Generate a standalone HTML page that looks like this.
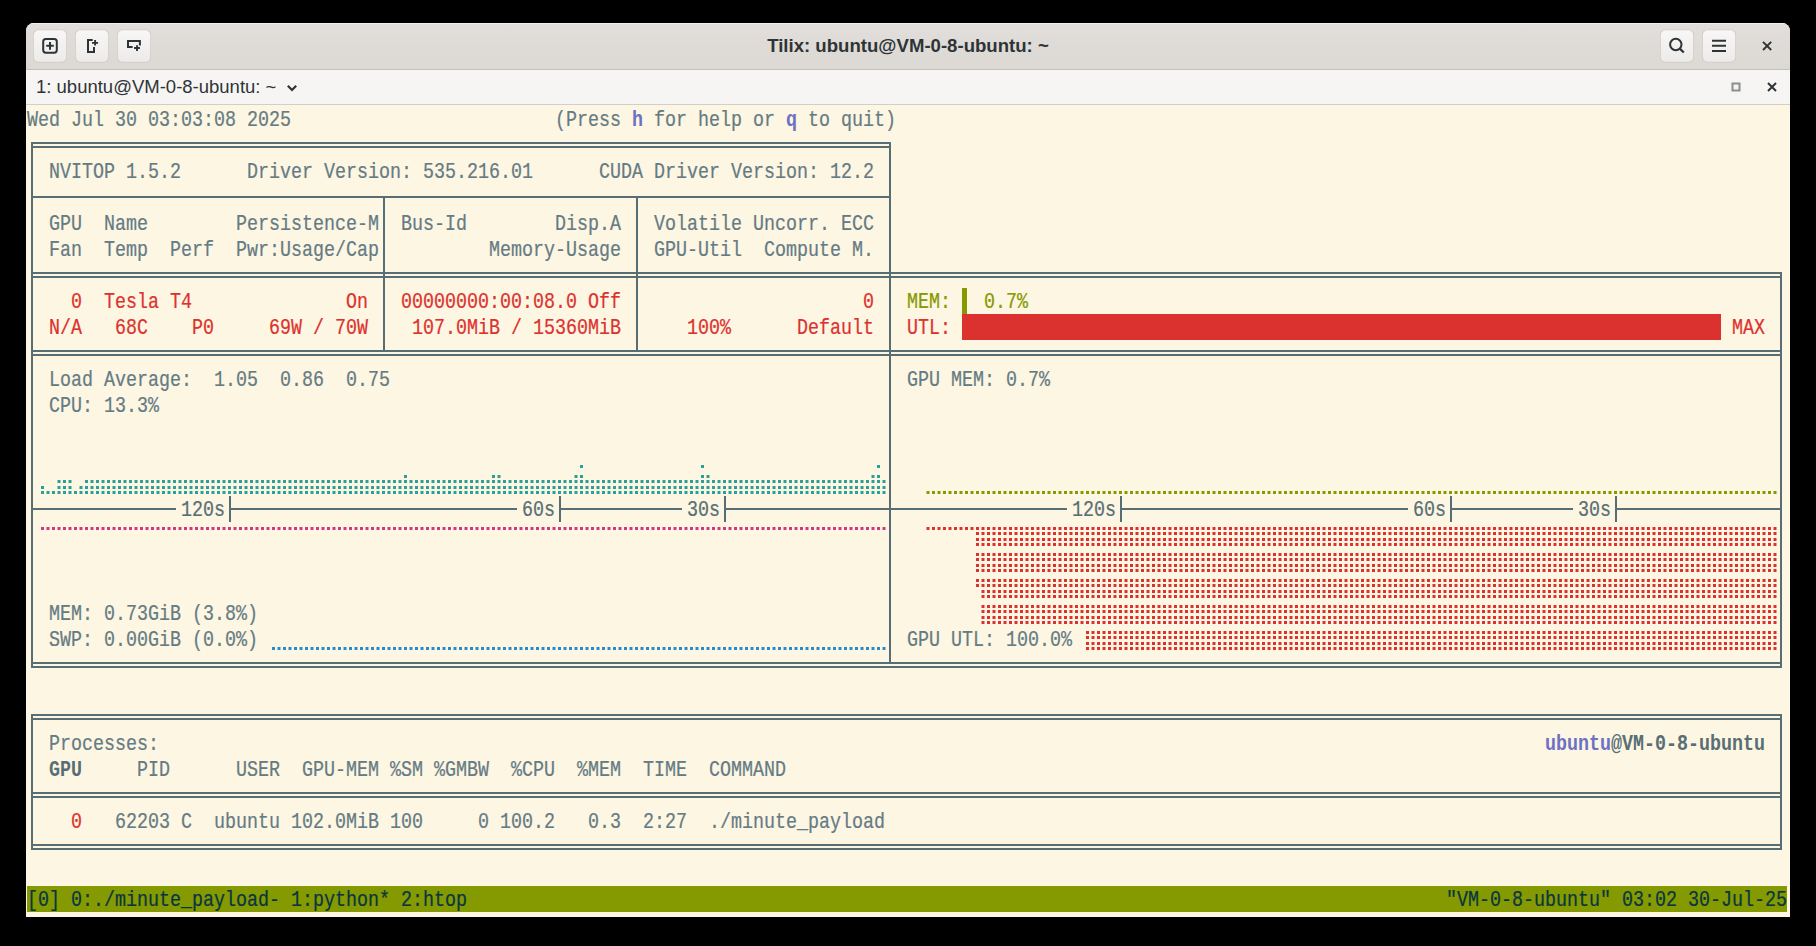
<!DOCTYPE html>
<html><head><meta charset="utf-8"><style>
html,body{margin:0;padding:0;}
body{width:1816px;height:946px;background:#000;position:relative;overflow:hidden;}
.win{position:absolute;left:26px;top:23px;width:1764px;height:894px;background:#fdf6e3;border-radius:8px 8px 0 0;overflow:hidden;}
.title{position:absolute;left:0;top:0;width:1764px;height:46px;background:linear-gradient(#e1dedb,#dcd8d4);border-bottom:1px solid #c7c1bb;box-shadow:inset 0 1px rgba(255,255,255,0.55);}
.tabbar{position:absolute;left:0;top:47px;width:1764px;height:34px;background:#f6f5f4;border-bottom:1px solid #d3cec9;}
.btn{position:absolute;top:7px;width:32px;height:30px;border:1px solid #d2cdc8;border-radius:6px;background:linear-gradient(#f6f5f4,#eeecea);box-shadow:0 1px 1px rgba(0,0,0,0.06);}
.ttl{position:absolute;left:0;top:0;width:1764px;text-align:center;font:bold 18.6px "Liberation Sans",sans-serif;color:#2e3436;line-height:46px;}
.tab{position:absolute;left:10px;top:47px;font:18.5px "Liberation Sans",sans-serif;color:#2e3436;line-height:34px;}
.t{position:absolute;white-space:pre;font-family:"Liberation Mono",monospace;font-size:18.333px;line-height:26px;height:26px;transform:scaleY(1.155);transform-origin:0 17.88px;-webkit-text-stroke:0.2px currentColor;}
.r{position:absolute;}
.dots{position:absolute;left:0;top:0;}
</style></head><body>
<div class="win">
 <div class="title"></div>
 <div class="tabbar"></div>
 <div class="ttl">Tilix: ubuntu@VM-0-8-ubuntu: ~</div>
 <div class="tab">1: ubuntu@VM-0-8-ubuntu: ~</div>
</div>
<svg class="dots" width="1816" height="946" viewBox="0 0 1816 946"><defs><linearGradient id="bg" x1="0" y1="0" x2="0" y2="1"><stop offset="0" stop-color="#f8f7f6"/><stop offset="1" stop-color="#edebe9"/></linearGradient></defs><rect x="33" y="29.6" width="34" height="33" rx="5.5" fill="#cfc9c3" opacity="0.9"/><rect x="33.8" y="30.3" width="32.4" height="31.5" rx="4.8" fill="url(#bg)"/><rect x="75" y="29.6" width="34" height="33" rx="5.5" fill="#cfc9c3" opacity="0.9"/><rect x="75.8" y="30.3" width="32.4" height="31.5" rx="4.8" fill="url(#bg)"/><rect x="117" y="29.6" width="34" height="33" rx="5.5" fill="#cfc9c3" opacity="0.9"/><rect x="117.8" y="30.3" width="32.4" height="31.5" rx="4.8" fill="url(#bg)"/><rect x="1660" y="29.6" width="34" height="33" rx="5.5" fill="#cfc9c3" opacity="0.9"/><rect x="1660.8" y="30.3" width="32.4" height="31.5" rx="4.8" fill="url(#bg)"/><rect x="1702" y="29.6" width="34" height="33" rx="5.5" fill="#cfc9c3" opacity="0.9"/><rect x="1702.8" y="30.3" width="32.4" height="31.5" rx="4.8" fill="url(#bg)"/><g fill="none" stroke="#2e3436" stroke-width="2"><rect x="43.2" y="39" width="13.6" height="13.7" rx="2.6"/><path d="M50 42v7.7M46.2 45.85h7.6"/><path d="M92.7 40H88V51.9H94V47.1"/><path d="M95.1 40.1v5.5M92 42.9h6.1" stroke-width="1.9"/><path d="M132.6 46.9H128V41H139.9V45.6"/><path d="M137 45.2v5.7M134.1 48h5.8" stroke-width="1.9"/><circle cx="1675.8" cy="44.5" r="5.7"/><path d="M1679.8 48.6l4 3.9" stroke-width="2.2"/><path d="M1712 40.7h14M1712 45.85h14M1712 51h14"/><path d="M1763 41.8l8.2 8.2M1771.2 41.8l-8.2 8.2" stroke-width="1.9"/><rect x="1732.5" y="83.5" width="7" height="7" stroke="#8b8e8f"/><path d="M1768 83l8 8M1776 83l-8 8" stroke-width="2"/><path d="M287.8 85.8L292 90L296.2 85.8" stroke-width="2.2"/></g></svg>
<svg class="dots" width="1816" height="946" viewBox="0 0 1816 946"><path fill="#2aa198" d="M41 486h3v3h-3zM41 491h3v3h-3zM46.5 491h3v3h-3zM52 491h3v3h-3zM57.5 480h3v3h-3zM57.5 486h3v3h-3zM57.5 491h3v3h-3zM63 480h3v3h-3zM63 486h3v3h-3zM63 491h3v3h-3zM68.5 480h3v3h-3zM68.5 486h3v3h-3zM68.5 491h3v3h-3zM74 491h3v3h-3zM79.5 486h3v3h-3zM79.5 491h3v3h-3zM85 480h3v3h-3zM85 486h3v3h-3zM85 491h3v3h-3zM90.5 480h3v3h-3zM90.5 486h3v3h-3zM90.5 491h3v3h-3zM96 480h3v3h-3zM96 486h3v3h-3zM96 491h3v3h-3zM101.5 480h3v3h-3zM101.5 486h3v3h-3zM101.5 491h3v3h-3zM107 480h3v3h-3zM107 486h3v3h-3zM107 491h3v3h-3zM112.5 480h3v3h-3zM112.5 486h3v3h-3zM112.5 491h3v3h-3zM118 480h3v3h-3zM118 486h3v3h-3zM118 491h3v3h-3zM123.5 480h3v3h-3zM123.5 486h3v3h-3zM123.5 491h3v3h-3zM129 480h3v3h-3zM129 486h3v3h-3zM129 491h3v3h-3zM134.5 480h3v3h-3zM134.5 486h3v3h-3zM134.5 491h3v3h-3zM140 480h3v3h-3zM140 486h3v3h-3zM140 491h3v3h-3zM145.5 480h3v3h-3zM145.5 486h3v3h-3zM145.5 491h3v3h-3zM151 480h3v3h-3zM151 486h3v3h-3zM151 491h3v3h-3zM156.5 480h3v3h-3zM156.5 486h3v3h-3zM156.5 491h3v3h-3zM162 480h3v3h-3zM162 486h3v3h-3zM162 491h3v3h-3zM167.5 480h3v3h-3zM167.5 486h3v3h-3zM167.5 491h3v3h-3zM173 480h3v3h-3zM173 486h3v3h-3zM173 491h3v3h-3zM178.5 480h3v3h-3zM178.5 486h3v3h-3zM178.5 491h3v3h-3zM184 480h3v3h-3zM184 486h3v3h-3zM184 491h3v3h-3zM189.5 480h3v3h-3zM189.5 486h3v3h-3zM189.5 491h3v3h-3zM195 480h3v3h-3zM195 486h3v3h-3zM195 491h3v3h-3zM200.5 480h3v3h-3zM200.5 486h3v3h-3zM200.5 491h3v3h-3zM206 480h3v3h-3zM206 486h3v3h-3zM206 491h3v3h-3zM211.5 480h3v3h-3zM211.5 486h3v3h-3zM211.5 491h3v3h-3zM217 480h3v3h-3zM217 486h3v3h-3zM217 491h3v3h-3zM222.5 480h3v3h-3zM222.5 486h3v3h-3zM222.5 491h3v3h-3zM228 480h3v3h-3zM228 486h3v3h-3zM228 491h3v3h-3zM233.5 480h3v3h-3zM233.5 486h3v3h-3zM233.5 491h3v3h-3zM239 480h3v3h-3zM239 486h3v3h-3zM239 491h3v3h-3zM244.5 480h3v3h-3zM244.5 486h3v3h-3zM244.5 491h3v3h-3zM250 480h3v3h-3zM250 486h3v3h-3zM250 491h3v3h-3zM255.5 480h3v3h-3zM255.5 486h3v3h-3zM255.5 491h3v3h-3zM261 480h3v3h-3zM261 486h3v3h-3zM261 491h3v3h-3zM266.5 480h3v3h-3zM266.5 486h3v3h-3zM266.5 491h3v3h-3zM272 480h3v3h-3zM272 486h3v3h-3zM272 491h3v3h-3zM277.5 480h3v3h-3zM277.5 486h3v3h-3zM277.5 491h3v3h-3zM283 480h3v3h-3zM283 486h3v3h-3zM283 491h3v3h-3zM288.5 480h3v3h-3zM288.5 486h3v3h-3zM288.5 491h3v3h-3zM294 480h3v3h-3zM294 486h3v3h-3zM294 491h3v3h-3zM299.5 480h3v3h-3zM299.5 486h3v3h-3zM299.5 491h3v3h-3zM305 480h3v3h-3zM305 486h3v3h-3zM305 491h3v3h-3zM310.5 480h3v3h-3zM310.5 486h3v3h-3zM310.5 491h3v3h-3zM316 480h3v3h-3zM316 486h3v3h-3zM316 491h3v3h-3zM321.5 480h3v3h-3zM321.5 486h3v3h-3zM321.5 491h3v3h-3zM327 480h3v3h-3zM327 486h3v3h-3zM327 491h3v3h-3zM332.5 480h3v3h-3zM332.5 486h3v3h-3zM332.5 491h3v3h-3zM338 480h3v3h-3zM338 486h3v3h-3zM338 491h3v3h-3zM343.5 480h3v3h-3zM343.5 486h3v3h-3zM343.5 491h3v3h-3zM349 480h3v3h-3zM349 486h3v3h-3zM349 491h3v3h-3zM354.5 480h3v3h-3zM354.5 486h3v3h-3zM354.5 491h3v3h-3zM360 480h3v3h-3zM360 486h3v3h-3zM360 491h3v3h-3zM365.5 480h3v3h-3zM365.5 486h3v3h-3zM365.5 491h3v3h-3zM371 480h3v3h-3zM371 486h3v3h-3zM371 491h3v3h-3zM376.5 480h3v3h-3zM376.5 486h3v3h-3zM376.5 491h3v3h-3zM382 480h3v3h-3zM382 486h3v3h-3zM382 491h3v3h-3zM387.5 480h3v3h-3zM387.5 486h3v3h-3zM387.5 491h3v3h-3zM393 480h3v3h-3zM393 486h3v3h-3zM393 491h3v3h-3zM398.5 480h3v3h-3zM398.5 486h3v3h-3zM398.5 491h3v3h-3zM404 475h3v3h-3zM404 480h3v3h-3zM404 486h3v3h-3zM404 491h3v3h-3zM409.5 480h3v3h-3zM409.5 486h3v3h-3zM409.5 491h3v3h-3zM415 480h3v3h-3zM415 486h3v3h-3zM415 491h3v3h-3zM420.5 480h3v3h-3zM420.5 486h3v3h-3zM420.5 491h3v3h-3zM426 480h3v3h-3zM426 486h3v3h-3zM426 491h3v3h-3zM431.5 480h3v3h-3zM431.5 486h3v3h-3zM431.5 491h3v3h-3zM437 480h3v3h-3zM437 486h3v3h-3zM437 491h3v3h-3zM442.5 480h3v3h-3zM442.5 486h3v3h-3zM442.5 491h3v3h-3zM448 480h3v3h-3zM448 486h3v3h-3zM448 491h3v3h-3zM453.5 480h3v3h-3zM453.5 486h3v3h-3zM453.5 491h3v3h-3zM459 480h3v3h-3zM459 486h3v3h-3zM459 491h3v3h-3zM464.5 480h3v3h-3zM464.5 486h3v3h-3zM464.5 491h3v3h-3zM470 480h3v3h-3zM470 486h3v3h-3zM470 491h3v3h-3zM475.5 480h3v3h-3zM475.5 486h3v3h-3zM475.5 491h3v3h-3zM481 480h3v3h-3zM481 486h3v3h-3zM481 491h3v3h-3zM486.5 480h3v3h-3zM486.5 486h3v3h-3zM486.5 491h3v3h-3zM492 475h3v3h-3zM492 480h3v3h-3zM492 486h3v3h-3zM492 491h3v3h-3zM497.5 475h3v3h-3zM497.5 480h3v3h-3zM497.5 486h3v3h-3zM497.5 491h3v3h-3zM503 480h3v3h-3zM503 486h3v3h-3zM503 491h3v3h-3zM508.5 480h3v3h-3zM508.5 486h3v3h-3zM508.5 491h3v3h-3zM514 480h3v3h-3zM514 486h3v3h-3zM514 491h3v3h-3zM519.5 480h3v3h-3zM519.5 486h3v3h-3zM519.5 491h3v3h-3zM525 480h3v3h-3zM525 486h3v3h-3zM525 491h3v3h-3zM530.5 480h3v3h-3zM530.5 486h3v3h-3zM530.5 491h3v3h-3zM536 480h3v3h-3zM536 486h3v3h-3zM536 491h3v3h-3zM541.5 480h3v3h-3zM541.5 486h3v3h-3zM541.5 491h3v3h-3zM547 480h3v3h-3zM547 486h3v3h-3zM547 491h3v3h-3zM552.5 480h3v3h-3zM552.5 486h3v3h-3zM552.5 491h3v3h-3zM558 480h3v3h-3zM558 486h3v3h-3zM558 491h3v3h-3zM563.5 480h3v3h-3zM563.5 486h3v3h-3zM563.5 491h3v3h-3zM569 480h3v3h-3zM569 486h3v3h-3zM569 491h3v3h-3zM574.5 475h3v3h-3zM574.5 480h3v3h-3zM574.5 486h3v3h-3zM574.5 491h3v3h-3zM580 475h3v3h-3zM580 480h3v3h-3zM580 486h3v3h-3zM580 491h3v3h-3zM580 465h3v3h-3zM585.5 480h3v3h-3zM585.5 486h3v3h-3zM585.5 491h3v3h-3zM591 480h3v3h-3zM591 486h3v3h-3zM591 491h3v3h-3zM596.5 480h3v3h-3zM596.5 486h3v3h-3zM596.5 491h3v3h-3zM602 480h3v3h-3zM602 486h3v3h-3zM602 491h3v3h-3zM607.5 480h3v3h-3zM607.5 486h3v3h-3zM607.5 491h3v3h-3zM613 480h3v3h-3zM613 486h3v3h-3zM613 491h3v3h-3zM618.5 480h3v3h-3zM618.5 486h3v3h-3zM618.5 491h3v3h-3zM624 480h3v3h-3zM624 486h3v3h-3zM624 491h3v3h-3zM629.5 480h3v3h-3zM629.5 486h3v3h-3zM629.5 491h3v3h-3zM635 480h3v3h-3zM635 486h3v3h-3zM635 491h3v3h-3zM640.5 480h3v3h-3zM640.5 486h3v3h-3zM640.5 491h3v3h-3zM646 480h3v3h-3zM646 486h3v3h-3zM646 491h3v3h-3zM651.5 480h3v3h-3zM651.5 486h3v3h-3zM651.5 491h3v3h-3zM657 480h3v3h-3zM657 486h3v3h-3zM657 491h3v3h-3zM662.5 480h3v3h-3zM662.5 486h3v3h-3zM662.5 491h3v3h-3zM668 480h3v3h-3zM668 486h3v3h-3zM668 491h3v3h-3zM673.5 480h3v3h-3zM673.5 486h3v3h-3zM673.5 491h3v3h-3zM679 480h3v3h-3zM679 486h3v3h-3zM679 491h3v3h-3zM684.5 480h3v3h-3zM684.5 486h3v3h-3zM684.5 491h3v3h-3zM690 480h3v3h-3zM690 486h3v3h-3zM690 491h3v3h-3zM695.5 480h3v3h-3zM695.5 486h3v3h-3zM695.5 491h3v3h-3zM701 475h3v3h-3zM701 480h3v3h-3zM701 486h3v3h-3zM701 491h3v3h-3zM701 465h3v3h-3zM706.5 475h3v3h-3zM706.5 480h3v3h-3zM706.5 486h3v3h-3zM706.5 491h3v3h-3zM712 480h3v3h-3zM712 486h3v3h-3zM712 491h3v3h-3zM717.5 480h3v3h-3zM717.5 486h3v3h-3zM717.5 491h3v3h-3zM723 480h3v3h-3zM723 486h3v3h-3zM723 491h3v3h-3zM728.5 480h3v3h-3zM728.5 486h3v3h-3zM728.5 491h3v3h-3zM734 480h3v3h-3zM734 486h3v3h-3zM734 491h3v3h-3zM739.5 480h3v3h-3zM739.5 486h3v3h-3zM739.5 491h3v3h-3zM745 480h3v3h-3zM745 486h3v3h-3zM745 491h3v3h-3zM750.5 480h3v3h-3zM750.5 486h3v3h-3zM750.5 491h3v3h-3zM756 480h3v3h-3zM756 486h3v3h-3zM756 491h3v3h-3zM761.5 480h3v3h-3zM761.5 486h3v3h-3zM761.5 491h3v3h-3zM767 480h3v3h-3zM767 486h3v3h-3zM767 491h3v3h-3zM772.5 480h3v3h-3zM772.5 486h3v3h-3zM772.5 491h3v3h-3zM778 480h3v3h-3zM778 486h3v3h-3zM778 491h3v3h-3zM783.5 480h3v3h-3zM783.5 486h3v3h-3zM783.5 491h3v3h-3zM789 480h3v3h-3zM789 486h3v3h-3zM789 491h3v3h-3zM794.5 480h3v3h-3zM794.5 486h3v3h-3zM794.5 491h3v3h-3zM800 480h3v3h-3zM800 486h3v3h-3zM800 491h3v3h-3zM805.5 480h3v3h-3zM805.5 486h3v3h-3zM805.5 491h3v3h-3zM811 480h3v3h-3zM811 486h3v3h-3zM811 491h3v3h-3zM816.5 480h3v3h-3zM816.5 486h3v3h-3zM816.5 491h3v3h-3zM822 480h3v3h-3zM822 486h3v3h-3zM822 491h3v3h-3zM827.5 480h3v3h-3zM827.5 486h3v3h-3zM827.5 491h3v3h-3zM833 480h3v3h-3zM833 486h3v3h-3zM833 491h3v3h-3zM838.5 480h3v3h-3zM838.5 486h3v3h-3zM838.5 491h3v3h-3zM844 480h3v3h-3zM844 486h3v3h-3zM844 491h3v3h-3zM849.5 480h3v3h-3zM849.5 486h3v3h-3zM849.5 491h3v3h-3zM855 480h3v3h-3zM855 486h3v3h-3zM855 491h3v3h-3zM860.5 480h3v3h-3zM860.5 486h3v3h-3zM860.5 491h3v3h-3zM866 480h3v3h-3zM866 486h3v3h-3zM866 491h3v3h-3zM871.5 475h3v3h-3zM871.5 480h3v3h-3zM871.5 486h3v3h-3zM871.5 491h3v3h-3zM877 475h3v3h-3zM877 480h3v3h-3zM877 486h3v3h-3zM877 491h3v3h-3zM877 465h3v3h-3zM882.5 480h3v3h-3zM882.5 486h3v3h-3zM882.5 491h3v3h-3z"/><path fill="#d33682" d="M41 527h3v3h-3zM46.5 527h3v3h-3zM52 527h3v3h-3zM57.5 527h3v3h-3zM63 527h3v3h-3zM68.5 527h3v3h-3zM74 527h3v3h-3zM79.5 527h3v3h-3zM85 527h3v3h-3zM90.5 527h3v3h-3zM96 527h3v3h-3zM101.5 527h3v3h-3zM107 527h3v3h-3zM112.5 527h3v3h-3zM118 527h3v3h-3zM123.5 527h3v3h-3zM129 527h3v3h-3zM134.5 527h3v3h-3zM140 527h3v3h-3zM145.5 527h3v3h-3zM151 527h3v3h-3zM156.5 527h3v3h-3zM162 527h3v3h-3zM167.5 527h3v3h-3zM173 527h3v3h-3zM178.5 527h3v3h-3zM184 527h3v3h-3zM189.5 527h3v3h-3zM195 527h3v3h-3zM200.5 527h3v3h-3zM206 527h3v3h-3zM211.5 527h3v3h-3zM217 527h3v3h-3zM222.5 527h3v3h-3zM228 527h3v3h-3zM233.5 527h3v3h-3zM239 527h3v3h-3zM244.5 527h3v3h-3zM250 527h3v3h-3zM255.5 527h3v3h-3zM261 527h3v3h-3zM266.5 527h3v3h-3zM272 527h3v3h-3zM277.5 527h3v3h-3zM283 527h3v3h-3zM288.5 527h3v3h-3zM294 527h3v3h-3zM299.5 527h3v3h-3zM305 527h3v3h-3zM310.5 527h3v3h-3zM316 527h3v3h-3zM321.5 527h3v3h-3zM327 527h3v3h-3zM332.5 527h3v3h-3zM338 527h3v3h-3zM343.5 527h3v3h-3zM349 527h3v3h-3zM354.5 527h3v3h-3zM360 527h3v3h-3zM365.5 527h3v3h-3zM371 527h3v3h-3zM376.5 527h3v3h-3zM382 527h3v3h-3zM387.5 527h3v3h-3zM393 527h3v3h-3zM398.5 527h3v3h-3zM404 527h3v3h-3zM409.5 527h3v3h-3zM415 527h3v3h-3zM420.5 527h3v3h-3zM426 527h3v3h-3zM431.5 527h3v3h-3zM437 527h3v3h-3zM442.5 527h3v3h-3zM448 527h3v3h-3zM453.5 527h3v3h-3zM459 527h3v3h-3zM464.5 527h3v3h-3zM470 527h3v3h-3zM475.5 527h3v3h-3zM481 527h3v3h-3zM486.5 527h3v3h-3zM492 527h3v3h-3zM497.5 527h3v3h-3zM503 527h3v3h-3zM508.5 527h3v3h-3zM514 527h3v3h-3zM519.5 527h3v3h-3zM525 527h3v3h-3zM530.5 527h3v3h-3zM536 527h3v3h-3zM541.5 527h3v3h-3zM547 527h3v3h-3zM552.5 527h3v3h-3zM558 527h3v3h-3zM563.5 527h3v3h-3zM569 527h3v3h-3zM574.5 527h3v3h-3zM580 527h3v3h-3zM585.5 527h3v3h-3zM591 527h3v3h-3zM596.5 527h3v3h-3zM602 527h3v3h-3zM607.5 527h3v3h-3zM613 527h3v3h-3zM618.5 527h3v3h-3zM624 527h3v3h-3zM629.5 527h3v3h-3zM635 527h3v3h-3zM640.5 527h3v3h-3zM646 527h3v3h-3zM651.5 527h3v3h-3zM657 527h3v3h-3zM662.5 527h3v3h-3zM668 527h3v3h-3zM673.5 527h3v3h-3zM679 527h3v3h-3zM684.5 527h3v3h-3zM690 527h3v3h-3zM695.5 527h3v3h-3zM701 527h3v3h-3zM706.5 527h3v3h-3zM712 527h3v3h-3zM717.5 527h3v3h-3zM723 527h3v3h-3zM728.5 527h3v3h-3zM734 527h3v3h-3zM739.5 527h3v3h-3zM745 527h3v3h-3zM750.5 527h3v3h-3zM756 527h3v3h-3zM761.5 527h3v3h-3zM767 527h3v3h-3zM772.5 527h3v3h-3zM778 527h3v3h-3zM783.5 527h3v3h-3zM789 527h3v3h-3zM794.5 527h3v3h-3zM800 527h3v3h-3zM805.5 527h3v3h-3zM811 527h3v3h-3zM816.5 527h3v3h-3zM822 527h3v3h-3zM827.5 527h3v3h-3zM833 527h3v3h-3zM838.5 527h3v3h-3zM844 527h3v3h-3zM849.5 527h3v3h-3zM855 527h3v3h-3zM860.5 527h3v3h-3zM866 527h3v3h-3zM871.5 527h3v3h-3zM877 527h3v3h-3zM882.5 527h3v3h-3z"/><path fill="#268bd2" d="M272 647h3v3h-3zM277.5 647h3v3h-3zM283 647h3v3h-3zM288.5 647h3v3h-3zM294 647h3v3h-3zM299.5 647h3v3h-3zM305 647h3v3h-3zM310.5 647h3v3h-3zM316 647h3v3h-3zM321.5 647h3v3h-3zM327 647h3v3h-3zM332.5 647h3v3h-3zM338 647h3v3h-3zM343.5 647h3v3h-3zM349 647h3v3h-3zM354.5 647h3v3h-3zM360 647h3v3h-3zM365.5 647h3v3h-3zM371 647h3v3h-3zM376.5 647h3v3h-3zM382 647h3v3h-3zM387.5 647h3v3h-3zM393 647h3v3h-3zM398.5 647h3v3h-3zM404 647h3v3h-3zM409.5 647h3v3h-3zM415 647h3v3h-3zM420.5 647h3v3h-3zM426 647h3v3h-3zM431.5 647h3v3h-3zM437 647h3v3h-3zM442.5 647h3v3h-3zM448 647h3v3h-3zM453.5 647h3v3h-3zM459 647h3v3h-3zM464.5 647h3v3h-3zM470 647h3v3h-3zM475.5 647h3v3h-3zM481 647h3v3h-3zM486.5 647h3v3h-3zM492 647h3v3h-3zM497.5 647h3v3h-3zM503 647h3v3h-3zM508.5 647h3v3h-3zM514 647h3v3h-3zM519.5 647h3v3h-3zM525 647h3v3h-3zM530.5 647h3v3h-3zM536 647h3v3h-3zM541.5 647h3v3h-3zM547 647h3v3h-3zM552.5 647h3v3h-3zM558 647h3v3h-3zM563.5 647h3v3h-3zM569 647h3v3h-3zM574.5 647h3v3h-3zM580 647h3v3h-3zM585.5 647h3v3h-3zM591 647h3v3h-3zM596.5 647h3v3h-3zM602 647h3v3h-3zM607.5 647h3v3h-3zM613 647h3v3h-3zM618.5 647h3v3h-3zM624 647h3v3h-3zM629.5 647h3v3h-3zM635 647h3v3h-3zM640.5 647h3v3h-3zM646 647h3v3h-3zM651.5 647h3v3h-3zM657 647h3v3h-3zM662.5 647h3v3h-3zM668 647h3v3h-3zM673.5 647h3v3h-3zM679 647h3v3h-3zM684.5 647h3v3h-3zM690 647h3v3h-3zM695.5 647h3v3h-3zM701 647h3v3h-3zM706.5 647h3v3h-3zM712 647h3v3h-3zM717.5 647h3v3h-3zM723 647h3v3h-3zM728.5 647h3v3h-3zM734 647h3v3h-3zM739.5 647h3v3h-3zM745 647h3v3h-3zM750.5 647h3v3h-3zM756 647h3v3h-3zM761.5 647h3v3h-3zM767 647h3v3h-3zM772.5 647h3v3h-3zM778 647h3v3h-3zM783.5 647h3v3h-3zM789 647h3v3h-3zM794.5 647h3v3h-3zM800 647h3v3h-3zM805.5 647h3v3h-3zM811 647h3v3h-3zM816.5 647h3v3h-3zM822 647h3v3h-3zM827.5 647h3v3h-3zM833 647h3v3h-3zM838.5 647h3v3h-3zM844 647h3v3h-3zM849.5 647h3v3h-3zM855 647h3v3h-3zM860.5 647h3v3h-3zM866 647h3v3h-3zM871.5 647h3v3h-3zM877 647h3v3h-3zM882.5 647h3v3h-3z"/><path fill="#859900" d="M926.5 491h3v3h-3zM932 491h3v3h-3zM937.5 491h3v3h-3zM943 491h3v3h-3zM948.5 491h3v3h-3zM954 491h3v3h-3zM959.5 491h3v3h-3zM965 491h3v3h-3zM970.5 491h3v3h-3zM976 491h3v3h-3zM981.5 491h3v3h-3zM987 491h3v3h-3zM992.5 491h3v3h-3zM998 491h3v3h-3zM1003.5 491h3v3h-3zM1009 491h3v3h-3zM1014.5 491h3v3h-3zM1020 491h3v3h-3zM1025.5 491h3v3h-3zM1031 491h3v3h-3zM1036.5 491h3v3h-3zM1042 491h3v3h-3zM1047.5 491h3v3h-3zM1053 491h3v3h-3zM1058.5 491h3v3h-3zM1064 491h3v3h-3zM1069.5 491h3v3h-3zM1075 491h3v3h-3zM1080.5 491h3v3h-3zM1086 491h3v3h-3zM1091.5 491h3v3h-3zM1097 491h3v3h-3zM1102.5 491h3v3h-3zM1108 491h3v3h-3zM1113.5 491h3v3h-3zM1119 491h3v3h-3zM1124.5 491h3v3h-3zM1130 491h3v3h-3zM1135.5 491h3v3h-3zM1141 491h3v3h-3zM1146.5 491h3v3h-3zM1152 491h3v3h-3zM1157.5 491h3v3h-3zM1163 491h3v3h-3zM1168.5 491h3v3h-3zM1174 491h3v3h-3zM1179.5 491h3v3h-3zM1185 491h3v3h-3zM1190.5 491h3v3h-3zM1196 491h3v3h-3zM1201.5 491h3v3h-3zM1207 491h3v3h-3zM1212.5 491h3v3h-3zM1218 491h3v3h-3zM1223.5 491h3v3h-3zM1229 491h3v3h-3zM1234.5 491h3v3h-3zM1240 491h3v3h-3zM1245.5 491h3v3h-3zM1251 491h3v3h-3zM1256.5 491h3v3h-3zM1262 491h3v3h-3zM1267.5 491h3v3h-3zM1273 491h3v3h-3zM1278.5 491h3v3h-3zM1284 491h3v3h-3zM1289.5 491h3v3h-3zM1295 491h3v3h-3zM1300.5 491h3v3h-3zM1306 491h3v3h-3zM1311.5 491h3v3h-3zM1317 491h3v3h-3zM1322.5 491h3v3h-3zM1328 491h3v3h-3zM1333.5 491h3v3h-3zM1339 491h3v3h-3zM1344.5 491h3v3h-3zM1350 491h3v3h-3zM1355.5 491h3v3h-3zM1361 491h3v3h-3zM1366.5 491h3v3h-3zM1372 491h3v3h-3zM1377.5 491h3v3h-3zM1383 491h3v3h-3zM1388.5 491h3v3h-3zM1394 491h3v3h-3zM1399.5 491h3v3h-3zM1405 491h3v3h-3zM1410.5 491h3v3h-3zM1416 491h3v3h-3zM1421.5 491h3v3h-3zM1427 491h3v3h-3zM1432.5 491h3v3h-3zM1438 491h3v3h-3zM1443.5 491h3v3h-3zM1449 491h3v3h-3zM1454.5 491h3v3h-3zM1460 491h3v3h-3zM1465.5 491h3v3h-3zM1471 491h3v3h-3zM1476.5 491h3v3h-3zM1482 491h3v3h-3zM1487.5 491h3v3h-3zM1493 491h3v3h-3zM1498.5 491h3v3h-3zM1504 491h3v3h-3zM1509.5 491h3v3h-3zM1515 491h3v3h-3zM1520.5 491h3v3h-3zM1526 491h3v3h-3zM1531.5 491h3v3h-3zM1537 491h3v3h-3zM1542.5 491h3v3h-3zM1548 491h3v3h-3zM1553.5 491h3v3h-3zM1559 491h3v3h-3zM1564.5 491h3v3h-3zM1570 491h3v3h-3zM1575.5 491h3v3h-3zM1581 491h3v3h-3zM1586.5 491h3v3h-3zM1592 491h3v3h-3zM1597.5 491h3v3h-3zM1603 491h3v3h-3zM1608.5 491h3v3h-3zM1614 491h3v3h-3zM1619.5 491h3v3h-3zM1625 491h3v3h-3zM1630.5 491h3v3h-3zM1636 491h3v3h-3zM1641.5 491h3v3h-3zM1647 491h3v3h-3zM1652.5 491h3v3h-3zM1658 491h3v3h-3zM1663.5 491h3v3h-3zM1669 491h3v3h-3zM1674.5 491h3v3h-3zM1680 491h3v3h-3zM1685.5 491h3v3h-3zM1691 491h3v3h-3zM1696.5 491h3v3h-3zM1702 491h3v3h-3zM1707.5 491h3v3h-3zM1713 491h3v3h-3zM1718.5 491h3v3h-3zM1724 491h3v3h-3zM1729.5 491h3v3h-3zM1735 491h3v3h-3zM1740.5 491h3v3h-3zM1746 491h3v3h-3zM1751.5 491h3v3h-3zM1757 491h3v3h-3zM1762.5 491h3v3h-3zM1768 491h3v3h-3zM1773.5 491h3v3h-3z"/><path fill="#dc322f" d="M926.5 527h3v3h-3zM932 527h3v3h-3zM937.5 527h3v3h-3zM943 527h3v3h-3zM948.5 527h3v3h-3zM954 527h3v3h-3zM959.5 527h3v3h-3zM965 527h3v3h-3zM970.5 527h3v3h-3zM976 527h3v3h-3zM976 532h3v3h-3zM976 538h3v3h-3zM976 543h3v3h-3zM976 553h3v3h-3zM976 558h3v3h-3zM976 564h3v3h-3zM976 569h3v3h-3zM976 579h3v3h-3zM976 584h3v3h-3zM981.5 527h3v3h-3zM981.5 532h3v3h-3zM981.5 538h3v3h-3zM981.5 543h3v3h-3zM981.5 553h3v3h-3zM981.5 558h3v3h-3zM981.5 564h3v3h-3zM981.5 569h3v3h-3zM981.5 579h3v3h-3zM981.5 584h3v3h-3zM981.5 590h3v3h-3zM981.5 595h3v3h-3zM981.5 605h3v3h-3zM981.5 610h3v3h-3zM981.5 616h3v3h-3zM981.5 621h3v3h-3zM987 527h3v3h-3zM987 532h3v3h-3zM987 538h3v3h-3zM987 543h3v3h-3zM987 553h3v3h-3zM987 558h3v3h-3zM987 564h3v3h-3zM987 569h3v3h-3zM987 579h3v3h-3zM987 584h3v3h-3zM987 590h3v3h-3zM987 595h3v3h-3zM987 605h3v3h-3zM987 610h3v3h-3zM987 616h3v3h-3zM987 621h3v3h-3zM992.5 527h3v3h-3zM992.5 532h3v3h-3zM992.5 538h3v3h-3zM992.5 543h3v3h-3zM992.5 553h3v3h-3zM992.5 558h3v3h-3zM992.5 564h3v3h-3zM992.5 569h3v3h-3zM992.5 579h3v3h-3zM992.5 584h3v3h-3zM992.5 590h3v3h-3zM992.5 595h3v3h-3zM992.5 605h3v3h-3zM992.5 610h3v3h-3zM992.5 616h3v3h-3zM992.5 621h3v3h-3zM998 527h3v3h-3zM998 532h3v3h-3zM998 538h3v3h-3zM998 543h3v3h-3zM998 553h3v3h-3zM998 558h3v3h-3zM998 564h3v3h-3zM998 569h3v3h-3zM998 579h3v3h-3zM998 584h3v3h-3zM998 590h3v3h-3zM998 595h3v3h-3zM998 605h3v3h-3zM998 610h3v3h-3zM998 616h3v3h-3zM998 621h3v3h-3zM1003.5 527h3v3h-3zM1003.5 532h3v3h-3zM1003.5 538h3v3h-3zM1003.5 543h3v3h-3zM1003.5 553h3v3h-3zM1003.5 558h3v3h-3zM1003.5 564h3v3h-3zM1003.5 569h3v3h-3zM1003.5 579h3v3h-3zM1003.5 584h3v3h-3zM1003.5 590h3v3h-3zM1003.5 595h3v3h-3zM1003.5 605h3v3h-3zM1003.5 610h3v3h-3zM1003.5 616h3v3h-3zM1003.5 621h3v3h-3zM1009 527h3v3h-3zM1009 532h3v3h-3zM1009 538h3v3h-3zM1009 543h3v3h-3zM1009 553h3v3h-3zM1009 558h3v3h-3zM1009 564h3v3h-3zM1009 569h3v3h-3zM1009 579h3v3h-3zM1009 584h3v3h-3zM1009 590h3v3h-3zM1009 595h3v3h-3zM1009 605h3v3h-3zM1009 610h3v3h-3zM1009 616h3v3h-3zM1009 621h3v3h-3zM1014.5 527h3v3h-3zM1014.5 532h3v3h-3zM1014.5 538h3v3h-3zM1014.5 543h3v3h-3zM1014.5 553h3v3h-3zM1014.5 558h3v3h-3zM1014.5 564h3v3h-3zM1014.5 569h3v3h-3zM1014.5 579h3v3h-3zM1014.5 584h3v3h-3zM1014.5 590h3v3h-3zM1014.5 595h3v3h-3zM1014.5 605h3v3h-3zM1014.5 610h3v3h-3zM1014.5 616h3v3h-3zM1014.5 621h3v3h-3zM1020 527h3v3h-3zM1020 532h3v3h-3zM1020 538h3v3h-3zM1020 543h3v3h-3zM1020 553h3v3h-3zM1020 558h3v3h-3zM1020 564h3v3h-3zM1020 569h3v3h-3zM1020 579h3v3h-3zM1020 584h3v3h-3zM1020 590h3v3h-3zM1020 595h3v3h-3zM1020 605h3v3h-3zM1020 610h3v3h-3zM1020 616h3v3h-3zM1020 621h3v3h-3zM1025.5 527h3v3h-3zM1025.5 532h3v3h-3zM1025.5 538h3v3h-3zM1025.5 543h3v3h-3zM1025.5 553h3v3h-3zM1025.5 558h3v3h-3zM1025.5 564h3v3h-3zM1025.5 569h3v3h-3zM1025.5 579h3v3h-3zM1025.5 584h3v3h-3zM1025.5 590h3v3h-3zM1025.5 595h3v3h-3zM1025.5 605h3v3h-3zM1025.5 610h3v3h-3zM1025.5 616h3v3h-3zM1025.5 621h3v3h-3zM1031 527h3v3h-3zM1031 532h3v3h-3zM1031 538h3v3h-3zM1031 543h3v3h-3zM1031 553h3v3h-3zM1031 558h3v3h-3zM1031 564h3v3h-3zM1031 569h3v3h-3zM1031 579h3v3h-3zM1031 584h3v3h-3zM1031 590h3v3h-3zM1031 595h3v3h-3zM1031 605h3v3h-3zM1031 610h3v3h-3zM1031 616h3v3h-3zM1031 621h3v3h-3zM1036.5 527h3v3h-3zM1036.5 532h3v3h-3zM1036.5 538h3v3h-3zM1036.5 543h3v3h-3zM1036.5 553h3v3h-3zM1036.5 558h3v3h-3zM1036.5 564h3v3h-3zM1036.5 569h3v3h-3zM1036.5 579h3v3h-3zM1036.5 584h3v3h-3zM1036.5 590h3v3h-3zM1036.5 595h3v3h-3zM1036.5 605h3v3h-3zM1036.5 610h3v3h-3zM1036.5 616h3v3h-3zM1036.5 621h3v3h-3zM1042 527h3v3h-3zM1042 532h3v3h-3zM1042 538h3v3h-3zM1042 543h3v3h-3zM1042 553h3v3h-3zM1042 558h3v3h-3zM1042 564h3v3h-3zM1042 569h3v3h-3zM1042 579h3v3h-3zM1042 584h3v3h-3zM1042 590h3v3h-3zM1042 595h3v3h-3zM1042 605h3v3h-3zM1042 610h3v3h-3zM1042 616h3v3h-3zM1042 621h3v3h-3zM1047.5 527h3v3h-3zM1047.5 532h3v3h-3zM1047.5 538h3v3h-3zM1047.5 543h3v3h-3zM1047.5 553h3v3h-3zM1047.5 558h3v3h-3zM1047.5 564h3v3h-3zM1047.5 569h3v3h-3zM1047.5 579h3v3h-3zM1047.5 584h3v3h-3zM1047.5 590h3v3h-3zM1047.5 595h3v3h-3zM1047.5 605h3v3h-3zM1047.5 610h3v3h-3zM1047.5 616h3v3h-3zM1047.5 621h3v3h-3zM1053 527h3v3h-3zM1053 532h3v3h-3zM1053 538h3v3h-3zM1053 543h3v3h-3zM1053 553h3v3h-3zM1053 558h3v3h-3zM1053 564h3v3h-3zM1053 569h3v3h-3zM1053 579h3v3h-3zM1053 584h3v3h-3zM1053 590h3v3h-3zM1053 595h3v3h-3zM1053 605h3v3h-3zM1053 610h3v3h-3zM1053 616h3v3h-3zM1053 621h3v3h-3zM1058.5 527h3v3h-3zM1058.5 532h3v3h-3zM1058.5 538h3v3h-3zM1058.5 543h3v3h-3zM1058.5 553h3v3h-3zM1058.5 558h3v3h-3zM1058.5 564h3v3h-3zM1058.5 569h3v3h-3zM1058.5 579h3v3h-3zM1058.5 584h3v3h-3zM1058.5 590h3v3h-3zM1058.5 595h3v3h-3zM1058.5 605h3v3h-3zM1058.5 610h3v3h-3zM1058.5 616h3v3h-3zM1058.5 621h3v3h-3zM1064 527h3v3h-3zM1064 532h3v3h-3zM1064 538h3v3h-3zM1064 543h3v3h-3zM1064 553h3v3h-3zM1064 558h3v3h-3zM1064 564h3v3h-3zM1064 569h3v3h-3zM1064 579h3v3h-3zM1064 584h3v3h-3zM1064 590h3v3h-3zM1064 595h3v3h-3zM1064 605h3v3h-3zM1064 610h3v3h-3zM1064 616h3v3h-3zM1064 621h3v3h-3zM1069.5 527h3v3h-3zM1069.5 532h3v3h-3zM1069.5 538h3v3h-3zM1069.5 543h3v3h-3zM1069.5 553h3v3h-3zM1069.5 558h3v3h-3zM1069.5 564h3v3h-3zM1069.5 569h3v3h-3zM1069.5 579h3v3h-3zM1069.5 584h3v3h-3zM1069.5 590h3v3h-3zM1069.5 595h3v3h-3zM1069.5 605h3v3h-3zM1069.5 610h3v3h-3zM1069.5 616h3v3h-3zM1069.5 621h3v3h-3zM1075 527h3v3h-3zM1075 532h3v3h-3zM1075 538h3v3h-3zM1075 543h3v3h-3zM1075 553h3v3h-3zM1075 558h3v3h-3zM1075 564h3v3h-3zM1075 569h3v3h-3zM1075 579h3v3h-3zM1075 584h3v3h-3zM1075 590h3v3h-3zM1075 595h3v3h-3zM1075 605h3v3h-3zM1075 610h3v3h-3zM1075 616h3v3h-3zM1075 621h3v3h-3zM1080.5 527h3v3h-3zM1080.5 532h3v3h-3zM1080.5 538h3v3h-3zM1080.5 543h3v3h-3zM1080.5 553h3v3h-3zM1080.5 558h3v3h-3zM1080.5 564h3v3h-3zM1080.5 569h3v3h-3zM1080.5 579h3v3h-3zM1080.5 584h3v3h-3zM1080.5 590h3v3h-3zM1080.5 595h3v3h-3zM1080.5 605h3v3h-3zM1080.5 610h3v3h-3zM1080.5 616h3v3h-3zM1080.5 621h3v3h-3zM1086 527h3v3h-3zM1086 532h3v3h-3zM1086 538h3v3h-3zM1086 543h3v3h-3zM1086 553h3v3h-3zM1086 558h3v3h-3zM1086 564h3v3h-3zM1086 569h3v3h-3zM1086 579h3v3h-3zM1086 584h3v3h-3zM1086 590h3v3h-3zM1086 595h3v3h-3zM1086 605h3v3h-3zM1086 610h3v3h-3zM1086 616h3v3h-3zM1086 621h3v3h-3zM1086 631h3v3h-3zM1086 636h3v3h-3zM1086 642h3v3h-3zM1086 647h3v3h-3zM1091.5 527h3v3h-3zM1091.5 532h3v3h-3zM1091.5 538h3v3h-3zM1091.5 543h3v3h-3zM1091.5 553h3v3h-3zM1091.5 558h3v3h-3zM1091.5 564h3v3h-3zM1091.5 569h3v3h-3zM1091.5 579h3v3h-3zM1091.5 584h3v3h-3zM1091.5 590h3v3h-3zM1091.5 595h3v3h-3zM1091.5 605h3v3h-3zM1091.5 610h3v3h-3zM1091.5 616h3v3h-3zM1091.5 621h3v3h-3zM1091.5 631h3v3h-3zM1091.5 636h3v3h-3zM1091.5 642h3v3h-3zM1091.5 647h3v3h-3zM1097 527h3v3h-3zM1097 532h3v3h-3zM1097 538h3v3h-3zM1097 543h3v3h-3zM1097 553h3v3h-3zM1097 558h3v3h-3zM1097 564h3v3h-3zM1097 569h3v3h-3zM1097 579h3v3h-3zM1097 584h3v3h-3zM1097 590h3v3h-3zM1097 595h3v3h-3zM1097 605h3v3h-3zM1097 610h3v3h-3zM1097 616h3v3h-3zM1097 621h3v3h-3zM1097 631h3v3h-3zM1097 636h3v3h-3zM1097 642h3v3h-3zM1097 647h3v3h-3zM1102.5 527h3v3h-3zM1102.5 532h3v3h-3zM1102.5 538h3v3h-3zM1102.5 543h3v3h-3zM1102.5 553h3v3h-3zM1102.5 558h3v3h-3zM1102.5 564h3v3h-3zM1102.5 569h3v3h-3zM1102.5 579h3v3h-3zM1102.5 584h3v3h-3zM1102.5 590h3v3h-3zM1102.5 595h3v3h-3zM1102.5 605h3v3h-3zM1102.5 610h3v3h-3zM1102.5 616h3v3h-3zM1102.5 621h3v3h-3zM1102.5 631h3v3h-3zM1102.5 636h3v3h-3zM1102.5 642h3v3h-3zM1102.5 647h3v3h-3zM1108 527h3v3h-3zM1108 532h3v3h-3zM1108 538h3v3h-3zM1108 543h3v3h-3zM1108 553h3v3h-3zM1108 558h3v3h-3zM1108 564h3v3h-3zM1108 569h3v3h-3zM1108 579h3v3h-3zM1108 584h3v3h-3zM1108 590h3v3h-3zM1108 595h3v3h-3zM1108 605h3v3h-3zM1108 610h3v3h-3zM1108 616h3v3h-3zM1108 621h3v3h-3zM1108 631h3v3h-3zM1108 636h3v3h-3zM1108 642h3v3h-3zM1108 647h3v3h-3zM1113.5 527h3v3h-3zM1113.5 532h3v3h-3zM1113.5 538h3v3h-3zM1113.5 543h3v3h-3zM1113.5 553h3v3h-3zM1113.5 558h3v3h-3zM1113.5 564h3v3h-3zM1113.5 569h3v3h-3zM1113.5 579h3v3h-3zM1113.5 584h3v3h-3zM1113.5 590h3v3h-3zM1113.5 595h3v3h-3zM1113.5 605h3v3h-3zM1113.5 610h3v3h-3zM1113.5 616h3v3h-3zM1113.5 621h3v3h-3zM1113.5 631h3v3h-3zM1113.5 636h3v3h-3zM1113.5 642h3v3h-3zM1113.5 647h3v3h-3zM1119 527h3v3h-3zM1119 532h3v3h-3zM1119 538h3v3h-3zM1119 543h3v3h-3zM1119 553h3v3h-3zM1119 558h3v3h-3zM1119 564h3v3h-3zM1119 569h3v3h-3zM1119 579h3v3h-3zM1119 584h3v3h-3zM1119 590h3v3h-3zM1119 595h3v3h-3zM1119 605h3v3h-3zM1119 610h3v3h-3zM1119 616h3v3h-3zM1119 621h3v3h-3zM1119 631h3v3h-3zM1119 636h3v3h-3zM1119 642h3v3h-3zM1119 647h3v3h-3zM1124.5 527h3v3h-3zM1124.5 532h3v3h-3zM1124.5 538h3v3h-3zM1124.5 543h3v3h-3zM1124.5 553h3v3h-3zM1124.5 558h3v3h-3zM1124.5 564h3v3h-3zM1124.5 569h3v3h-3zM1124.5 579h3v3h-3zM1124.5 584h3v3h-3zM1124.5 590h3v3h-3zM1124.5 595h3v3h-3zM1124.5 605h3v3h-3zM1124.5 610h3v3h-3zM1124.5 616h3v3h-3zM1124.5 621h3v3h-3zM1124.5 631h3v3h-3zM1124.5 636h3v3h-3zM1124.5 642h3v3h-3zM1124.5 647h3v3h-3zM1130 527h3v3h-3zM1130 532h3v3h-3zM1130 538h3v3h-3zM1130 543h3v3h-3zM1130 553h3v3h-3zM1130 558h3v3h-3zM1130 564h3v3h-3zM1130 569h3v3h-3zM1130 579h3v3h-3zM1130 584h3v3h-3zM1130 590h3v3h-3zM1130 595h3v3h-3zM1130 605h3v3h-3zM1130 610h3v3h-3zM1130 616h3v3h-3zM1130 621h3v3h-3zM1130 631h3v3h-3zM1130 636h3v3h-3zM1130 642h3v3h-3zM1130 647h3v3h-3zM1135.5 527h3v3h-3zM1135.5 532h3v3h-3zM1135.5 538h3v3h-3zM1135.5 543h3v3h-3zM1135.5 553h3v3h-3zM1135.5 558h3v3h-3zM1135.5 564h3v3h-3zM1135.5 569h3v3h-3zM1135.5 579h3v3h-3zM1135.5 584h3v3h-3zM1135.5 590h3v3h-3zM1135.5 595h3v3h-3zM1135.5 605h3v3h-3zM1135.5 610h3v3h-3zM1135.5 616h3v3h-3zM1135.5 621h3v3h-3zM1135.5 631h3v3h-3zM1135.5 636h3v3h-3zM1135.5 642h3v3h-3zM1135.5 647h3v3h-3zM1141 527h3v3h-3zM1141 532h3v3h-3zM1141 538h3v3h-3zM1141 543h3v3h-3zM1141 553h3v3h-3zM1141 558h3v3h-3zM1141 564h3v3h-3zM1141 569h3v3h-3zM1141 579h3v3h-3zM1141 584h3v3h-3zM1141 590h3v3h-3zM1141 595h3v3h-3zM1141 605h3v3h-3zM1141 610h3v3h-3zM1141 616h3v3h-3zM1141 621h3v3h-3zM1141 631h3v3h-3zM1141 636h3v3h-3zM1141 642h3v3h-3zM1141 647h3v3h-3zM1146.5 527h3v3h-3zM1146.5 532h3v3h-3zM1146.5 538h3v3h-3zM1146.5 543h3v3h-3zM1146.5 553h3v3h-3zM1146.5 558h3v3h-3zM1146.5 564h3v3h-3zM1146.5 569h3v3h-3zM1146.5 579h3v3h-3zM1146.5 584h3v3h-3zM1146.5 590h3v3h-3zM1146.5 595h3v3h-3zM1146.5 605h3v3h-3zM1146.5 610h3v3h-3zM1146.5 616h3v3h-3zM1146.5 621h3v3h-3zM1146.5 631h3v3h-3zM1146.5 636h3v3h-3zM1146.5 642h3v3h-3zM1146.5 647h3v3h-3zM1152 527h3v3h-3zM1152 532h3v3h-3zM1152 538h3v3h-3zM1152 543h3v3h-3zM1152 553h3v3h-3zM1152 558h3v3h-3zM1152 564h3v3h-3zM1152 569h3v3h-3zM1152 579h3v3h-3zM1152 584h3v3h-3zM1152 590h3v3h-3zM1152 595h3v3h-3zM1152 605h3v3h-3zM1152 610h3v3h-3zM1152 616h3v3h-3zM1152 621h3v3h-3zM1152 631h3v3h-3zM1152 636h3v3h-3zM1152 642h3v3h-3zM1152 647h3v3h-3zM1157.5 527h3v3h-3zM1157.5 532h3v3h-3zM1157.5 538h3v3h-3zM1157.5 543h3v3h-3zM1157.5 553h3v3h-3zM1157.5 558h3v3h-3zM1157.5 564h3v3h-3zM1157.5 569h3v3h-3zM1157.5 579h3v3h-3zM1157.5 584h3v3h-3zM1157.5 590h3v3h-3zM1157.5 595h3v3h-3zM1157.5 605h3v3h-3zM1157.5 610h3v3h-3zM1157.5 616h3v3h-3zM1157.5 621h3v3h-3zM1157.5 631h3v3h-3zM1157.5 636h3v3h-3zM1157.5 642h3v3h-3zM1157.5 647h3v3h-3zM1163 527h3v3h-3zM1163 532h3v3h-3zM1163 538h3v3h-3zM1163 543h3v3h-3zM1163 553h3v3h-3zM1163 558h3v3h-3zM1163 564h3v3h-3zM1163 569h3v3h-3zM1163 579h3v3h-3zM1163 584h3v3h-3zM1163 590h3v3h-3zM1163 595h3v3h-3zM1163 605h3v3h-3zM1163 610h3v3h-3zM1163 616h3v3h-3zM1163 621h3v3h-3zM1163 631h3v3h-3zM1163 636h3v3h-3zM1163 642h3v3h-3zM1163 647h3v3h-3zM1168.5 527h3v3h-3zM1168.5 532h3v3h-3zM1168.5 538h3v3h-3zM1168.5 543h3v3h-3zM1168.5 553h3v3h-3zM1168.5 558h3v3h-3zM1168.5 564h3v3h-3zM1168.5 569h3v3h-3zM1168.5 579h3v3h-3zM1168.5 584h3v3h-3zM1168.5 590h3v3h-3zM1168.5 595h3v3h-3zM1168.5 605h3v3h-3zM1168.5 610h3v3h-3zM1168.5 616h3v3h-3zM1168.5 621h3v3h-3zM1168.5 631h3v3h-3zM1168.5 636h3v3h-3zM1168.5 642h3v3h-3zM1168.5 647h3v3h-3zM1174 527h3v3h-3zM1174 532h3v3h-3zM1174 538h3v3h-3zM1174 543h3v3h-3zM1174 553h3v3h-3zM1174 558h3v3h-3zM1174 564h3v3h-3zM1174 569h3v3h-3zM1174 579h3v3h-3zM1174 584h3v3h-3zM1174 590h3v3h-3zM1174 595h3v3h-3zM1174 605h3v3h-3zM1174 610h3v3h-3zM1174 616h3v3h-3zM1174 621h3v3h-3zM1174 631h3v3h-3zM1174 636h3v3h-3zM1174 642h3v3h-3zM1174 647h3v3h-3zM1179.5 527h3v3h-3zM1179.5 532h3v3h-3zM1179.5 538h3v3h-3zM1179.5 543h3v3h-3zM1179.5 553h3v3h-3zM1179.5 558h3v3h-3zM1179.5 564h3v3h-3zM1179.5 569h3v3h-3zM1179.5 579h3v3h-3zM1179.5 584h3v3h-3zM1179.5 590h3v3h-3zM1179.5 595h3v3h-3zM1179.5 605h3v3h-3zM1179.5 610h3v3h-3zM1179.5 616h3v3h-3zM1179.5 621h3v3h-3zM1179.5 631h3v3h-3zM1179.5 636h3v3h-3zM1179.5 642h3v3h-3zM1179.5 647h3v3h-3zM1185 527h3v3h-3zM1185 532h3v3h-3zM1185 538h3v3h-3zM1185 543h3v3h-3zM1185 553h3v3h-3zM1185 558h3v3h-3zM1185 564h3v3h-3zM1185 569h3v3h-3zM1185 579h3v3h-3zM1185 584h3v3h-3zM1185 590h3v3h-3zM1185 595h3v3h-3zM1185 605h3v3h-3zM1185 610h3v3h-3zM1185 616h3v3h-3zM1185 621h3v3h-3zM1185 631h3v3h-3zM1185 636h3v3h-3zM1185 642h3v3h-3zM1185 647h3v3h-3zM1190.5 527h3v3h-3zM1190.5 532h3v3h-3zM1190.5 538h3v3h-3zM1190.5 543h3v3h-3zM1190.5 553h3v3h-3zM1190.5 558h3v3h-3zM1190.5 564h3v3h-3zM1190.5 569h3v3h-3zM1190.5 579h3v3h-3zM1190.5 584h3v3h-3zM1190.5 590h3v3h-3zM1190.5 595h3v3h-3zM1190.5 605h3v3h-3zM1190.5 610h3v3h-3zM1190.5 616h3v3h-3zM1190.5 621h3v3h-3zM1190.5 631h3v3h-3zM1190.5 636h3v3h-3zM1190.5 642h3v3h-3zM1190.5 647h3v3h-3zM1196 527h3v3h-3zM1196 532h3v3h-3zM1196 538h3v3h-3zM1196 543h3v3h-3zM1196 553h3v3h-3zM1196 558h3v3h-3zM1196 564h3v3h-3zM1196 569h3v3h-3zM1196 579h3v3h-3zM1196 584h3v3h-3zM1196 590h3v3h-3zM1196 595h3v3h-3zM1196 605h3v3h-3zM1196 610h3v3h-3zM1196 616h3v3h-3zM1196 621h3v3h-3zM1196 631h3v3h-3zM1196 636h3v3h-3zM1196 642h3v3h-3zM1196 647h3v3h-3zM1201.5 527h3v3h-3zM1201.5 532h3v3h-3zM1201.5 538h3v3h-3zM1201.5 543h3v3h-3zM1201.5 553h3v3h-3zM1201.5 558h3v3h-3zM1201.5 564h3v3h-3zM1201.5 569h3v3h-3zM1201.5 579h3v3h-3zM1201.5 584h3v3h-3zM1201.5 590h3v3h-3zM1201.5 595h3v3h-3zM1201.5 605h3v3h-3zM1201.5 610h3v3h-3zM1201.5 616h3v3h-3zM1201.5 621h3v3h-3zM1201.5 631h3v3h-3zM1201.5 636h3v3h-3zM1201.5 642h3v3h-3zM1201.5 647h3v3h-3zM1207 527h3v3h-3zM1207 532h3v3h-3zM1207 538h3v3h-3zM1207 543h3v3h-3zM1207 553h3v3h-3zM1207 558h3v3h-3zM1207 564h3v3h-3zM1207 569h3v3h-3zM1207 579h3v3h-3zM1207 584h3v3h-3zM1207 590h3v3h-3zM1207 595h3v3h-3zM1207 605h3v3h-3zM1207 610h3v3h-3zM1207 616h3v3h-3zM1207 621h3v3h-3zM1207 631h3v3h-3zM1207 636h3v3h-3zM1207 642h3v3h-3zM1207 647h3v3h-3zM1212.5 527h3v3h-3zM1212.5 532h3v3h-3zM1212.5 538h3v3h-3zM1212.5 543h3v3h-3zM1212.5 553h3v3h-3zM1212.5 558h3v3h-3zM1212.5 564h3v3h-3zM1212.5 569h3v3h-3zM1212.5 579h3v3h-3zM1212.5 584h3v3h-3zM1212.5 590h3v3h-3zM1212.5 595h3v3h-3zM1212.5 605h3v3h-3zM1212.5 610h3v3h-3zM1212.5 616h3v3h-3zM1212.5 621h3v3h-3zM1212.5 631h3v3h-3zM1212.5 636h3v3h-3zM1212.5 642h3v3h-3zM1212.5 647h3v3h-3zM1218 527h3v3h-3zM1218 532h3v3h-3zM1218 538h3v3h-3zM1218 543h3v3h-3zM1218 553h3v3h-3zM1218 558h3v3h-3zM1218 564h3v3h-3zM1218 569h3v3h-3zM1218 579h3v3h-3zM1218 584h3v3h-3zM1218 590h3v3h-3zM1218 595h3v3h-3zM1218 605h3v3h-3zM1218 610h3v3h-3zM1218 616h3v3h-3zM1218 621h3v3h-3zM1218 631h3v3h-3zM1218 636h3v3h-3zM1218 642h3v3h-3zM1218 647h3v3h-3zM1223.5 527h3v3h-3zM1223.5 532h3v3h-3zM1223.5 538h3v3h-3zM1223.5 543h3v3h-3zM1223.5 553h3v3h-3zM1223.5 558h3v3h-3zM1223.5 564h3v3h-3zM1223.5 569h3v3h-3zM1223.5 579h3v3h-3zM1223.5 584h3v3h-3zM1223.5 590h3v3h-3zM1223.5 595h3v3h-3zM1223.5 605h3v3h-3zM1223.5 610h3v3h-3zM1223.5 616h3v3h-3zM1223.5 621h3v3h-3zM1223.5 631h3v3h-3zM1223.5 636h3v3h-3zM1223.5 642h3v3h-3zM1223.5 647h3v3h-3zM1229 527h3v3h-3zM1229 532h3v3h-3zM1229 538h3v3h-3zM1229 543h3v3h-3zM1229 553h3v3h-3zM1229 558h3v3h-3zM1229 564h3v3h-3zM1229 569h3v3h-3zM1229 579h3v3h-3zM1229 584h3v3h-3zM1229 590h3v3h-3zM1229 595h3v3h-3zM1229 605h3v3h-3zM1229 610h3v3h-3zM1229 616h3v3h-3zM1229 621h3v3h-3zM1229 631h3v3h-3zM1229 636h3v3h-3zM1229 642h3v3h-3zM1229 647h3v3h-3zM1234.5 527h3v3h-3zM1234.5 532h3v3h-3zM1234.5 538h3v3h-3zM1234.5 543h3v3h-3zM1234.5 553h3v3h-3zM1234.5 558h3v3h-3zM1234.5 564h3v3h-3zM1234.5 569h3v3h-3zM1234.5 579h3v3h-3zM1234.5 584h3v3h-3zM1234.5 590h3v3h-3zM1234.5 595h3v3h-3zM1234.5 605h3v3h-3zM1234.5 610h3v3h-3zM1234.5 616h3v3h-3zM1234.5 621h3v3h-3zM1234.5 631h3v3h-3zM1234.5 636h3v3h-3zM1234.5 642h3v3h-3zM1234.5 647h3v3h-3zM1240 527h3v3h-3zM1240 532h3v3h-3zM1240 538h3v3h-3zM1240 543h3v3h-3zM1240 553h3v3h-3zM1240 558h3v3h-3zM1240 564h3v3h-3zM1240 569h3v3h-3zM1240 579h3v3h-3zM1240 584h3v3h-3zM1240 590h3v3h-3zM1240 595h3v3h-3zM1240 605h3v3h-3zM1240 610h3v3h-3zM1240 616h3v3h-3zM1240 621h3v3h-3zM1240 631h3v3h-3zM1240 636h3v3h-3zM1240 642h3v3h-3zM1240 647h3v3h-3zM1245.5 527h3v3h-3zM1245.5 532h3v3h-3zM1245.5 538h3v3h-3zM1245.5 543h3v3h-3zM1245.5 553h3v3h-3zM1245.5 558h3v3h-3zM1245.5 564h3v3h-3zM1245.5 569h3v3h-3zM1245.5 579h3v3h-3zM1245.5 584h3v3h-3zM1245.5 590h3v3h-3zM1245.5 595h3v3h-3zM1245.5 605h3v3h-3zM1245.5 610h3v3h-3zM1245.5 616h3v3h-3zM1245.5 621h3v3h-3zM1245.5 631h3v3h-3zM1245.5 636h3v3h-3zM1245.5 642h3v3h-3zM1245.5 647h3v3h-3zM1251 527h3v3h-3zM1251 532h3v3h-3zM1251 538h3v3h-3zM1251 543h3v3h-3zM1251 553h3v3h-3zM1251 558h3v3h-3zM1251 564h3v3h-3zM1251 569h3v3h-3zM1251 579h3v3h-3zM1251 584h3v3h-3zM1251 590h3v3h-3zM1251 595h3v3h-3zM1251 605h3v3h-3zM1251 610h3v3h-3zM1251 616h3v3h-3zM1251 621h3v3h-3zM1251 631h3v3h-3zM1251 636h3v3h-3zM1251 642h3v3h-3zM1251 647h3v3h-3zM1256.5 527h3v3h-3zM1256.5 532h3v3h-3zM1256.5 538h3v3h-3zM1256.5 543h3v3h-3zM1256.5 553h3v3h-3zM1256.5 558h3v3h-3zM1256.5 564h3v3h-3zM1256.5 569h3v3h-3zM1256.5 579h3v3h-3zM1256.5 584h3v3h-3zM1256.5 590h3v3h-3zM1256.5 595h3v3h-3zM1256.5 605h3v3h-3zM1256.5 610h3v3h-3zM1256.5 616h3v3h-3zM1256.5 621h3v3h-3zM1256.5 631h3v3h-3zM1256.5 636h3v3h-3zM1256.5 642h3v3h-3zM1256.5 647h3v3h-3zM1262 527h3v3h-3zM1262 532h3v3h-3zM1262 538h3v3h-3zM1262 543h3v3h-3zM1262 553h3v3h-3zM1262 558h3v3h-3zM1262 564h3v3h-3zM1262 569h3v3h-3zM1262 579h3v3h-3zM1262 584h3v3h-3zM1262 590h3v3h-3zM1262 595h3v3h-3zM1262 605h3v3h-3zM1262 610h3v3h-3zM1262 616h3v3h-3zM1262 621h3v3h-3zM1262 631h3v3h-3zM1262 636h3v3h-3zM1262 642h3v3h-3zM1262 647h3v3h-3zM1267.5 527h3v3h-3zM1267.5 532h3v3h-3zM1267.5 538h3v3h-3zM1267.5 543h3v3h-3zM1267.5 553h3v3h-3zM1267.5 558h3v3h-3zM1267.5 564h3v3h-3zM1267.5 569h3v3h-3zM1267.5 579h3v3h-3zM1267.5 584h3v3h-3zM1267.5 590h3v3h-3zM1267.5 595h3v3h-3zM1267.5 605h3v3h-3zM1267.5 610h3v3h-3zM1267.5 616h3v3h-3zM1267.5 621h3v3h-3zM1267.5 631h3v3h-3zM1267.5 636h3v3h-3zM1267.5 642h3v3h-3zM1267.5 647h3v3h-3zM1273 527h3v3h-3zM1273 532h3v3h-3zM1273 538h3v3h-3zM1273 543h3v3h-3zM1273 553h3v3h-3zM1273 558h3v3h-3zM1273 564h3v3h-3zM1273 569h3v3h-3zM1273 579h3v3h-3zM1273 584h3v3h-3zM1273 590h3v3h-3zM1273 595h3v3h-3zM1273 605h3v3h-3zM1273 610h3v3h-3zM1273 616h3v3h-3zM1273 621h3v3h-3zM1273 631h3v3h-3zM1273 636h3v3h-3zM1273 642h3v3h-3zM1273 647h3v3h-3zM1278.5 527h3v3h-3zM1278.5 532h3v3h-3zM1278.5 538h3v3h-3zM1278.5 543h3v3h-3zM1278.5 553h3v3h-3zM1278.5 558h3v3h-3zM1278.5 564h3v3h-3zM1278.5 569h3v3h-3zM1278.5 579h3v3h-3zM1278.5 584h3v3h-3zM1278.5 590h3v3h-3zM1278.5 595h3v3h-3zM1278.5 605h3v3h-3zM1278.5 610h3v3h-3zM1278.5 616h3v3h-3zM1278.5 621h3v3h-3zM1278.5 631h3v3h-3zM1278.5 636h3v3h-3zM1278.5 642h3v3h-3zM1278.5 647h3v3h-3zM1284 527h3v3h-3zM1284 532h3v3h-3zM1284 538h3v3h-3zM1284 543h3v3h-3zM1284 553h3v3h-3zM1284 558h3v3h-3zM1284 564h3v3h-3zM1284 569h3v3h-3zM1284 579h3v3h-3zM1284 584h3v3h-3zM1284 590h3v3h-3zM1284 595h3v3h-3zM1284 605h3v3h-3zM1284 610h3v3h-3zM1284 616h3v3h-3zM1284 621h3v3h-3zM1284 631h3v3h-3zM1284 636h3v3h-3zM1284 642h3v3h-3zM1284 647h3v3h-3zM1289.5 527h3v3h-3zM1289.5 532h3v3h-3zM1289.5 538h3v3h-3zM1289.5 543h3v3h-3zM1289.5 553h3v3h-3zM1289.5 558h3v3h-3zM1289.5 564h3v3h-3zM1289.5 569h3v3h-3zM1289.5 579h3v3h-3zM1289.5 584h3v3h-3zM1289.5 590h3v3h-3zM1289.5 595h3v3h-3zM1289.5 605h3v3h-3zM1289.5 610h3v3h-3zM1289.5 616h3v3h-3zM1289.5 621h3v3h-3zM1289.5 631h3v3h-3zM1289.5 636h3v3h-3zM1289.5 642h3v3h-3zM1289.5 647h3v3h-3zM1295 527h3v3h-3zM1295 532h3v3h-3zM1295 538h3v3h-3zM1295 543h3v3h-3zM1295 553h3v3h-3zM1295 558h3v3h-3zM1295 564h3v3h-3zM1295 569h3v3h-3zM1295 579h3v3h-3zM1295 584h3v3h-3zM1295 590h3v3h-3zM1295 595h3v3h-3zM1295 605h3v3h-3zM1295 610h3v3h-3zM1295 616h3v3h-3zM1295 621h3v3h-3zM1295 631h3v3h-3zM1295 636h3v3h-3zM1295 642h3v3h-3zM1295 647h3v3h-3zM1300.5 527h3v3h-3zM1300.5 532h3v3h-3zM1300.5 538h3v3h-3zM1300.5 543h3v3h-3zM1300.5 553h3v3h-3zM1300.5 558h3v3h-3zM1300.5 564h3v3h-3zM1300.5 569h3v3h-3zM1300.5 579h3v3h-3zM1300.5 584h3v3h-3zM1300.5 590h3v3h-3zM1300.5 595h3v3h-3zM1300.5 605h3v3h-3zM1300.5 610h3v3h-3zM1300.5 616h3v3h-3zM1300.5 621h3v3h-3zM1300.5 631h3v3h-3zM1300.5 636h3v3h-3zM1300.5 642h3v3h-3zM1300.5 647h3v3h-3zM1306 527h3v3h-3zM1306 532h3v3h-3zM1306 538h3v3h-3zM1306 543h3v3h-3zM1306 553h3v3h-3zM1306 558h3v3h-3zM1306 564h3v3h-3zM1306 569h3v3h-3zM1306 579h3v3h-3zM1306 584h3v3h-3zM1306 590h3v3h-3zM1306 595h3v3h-3zM1306 605h3v3h-3zM1306 610h3v3h-3zM1306 616h3v3h-3zM1306 621h3v3h-3zM1306 631h3v3h-3zM1306 636h3v3h-3zM1306 642h3v3h-3zM1306 647h3v3h-3zM1311.5 527h3v3h-3zM1311.5 532h3v3h-3zM1311.5 538h3v3h-3zM1311.5 543h3v3h-3zM1311.5 553h3v3h-3zM1311.5 558h3v3h-3zM1311.5 564h3v3h-3zM1311.5 569h3v3h-3zM1311.5 579h3v3h-3zM1311.5 584h3v3h-3zM1311.5 590h3v3h-3zM1311.5 595h3v3h-3zM1311.5 605h3v3h-3zM1311.5 610h3v3h-3zM1311.5 616h3v3h-3zM1311.5 621h3v3h-3zM1311.5 631h3v3h-3zM1311.5 636h3v3h-3zM1311.5 642h3v3h-3zM1311.5 647h3v3h-3zM1317 527h3v3h-3zM1317 532h3v3h-3zM1317 538h3v3h-3zM1317 543h3v3h-3zM1317 553h3v3h-3zM1317 558h3v3h-3zM1317 564h3v3h-3zM1317 569h3v3h-3zM1317 579h3v3h-3zM1317 584h3v3h-3zM1317 590h3v3h-3zM1317 595h3v3h-3zM1317 605h3v3h-3zM1317 610h3v3h-3zM1317 616h3v3h-3zM1317 621h3v3h-3zM1317 631h3v3h-3zM1317 636h3v3h-3zM1317 642h3v3h-3zM1317 647h3v3h-3zM1322.5 527h3v3h-3zM1322.5 532h3v3h-3zM1322.5 538h3v3h-3zM1322.5 543h3v3h-3zM1322.5 553h3v3h-3zM1322.5 558h3v3h-3zM1322.5 564h3v3h-3zM1322.5 569h3v3h-3zM1322.5 579h3v3h-3zM1322.5 584h3v3h-3zM1322.5 590h3v3h-3zM1322.5 595h3v3h-3zM1322.5 605h3v3h-3zM1322.5 610h3v3h-3zM1322.5 616h3v3h-3zM1322.5 621h3v3h-3zM1322.5 631h3v3h-3zM1322.5 636h3v3h-3zM1322.5 642h3v3h-3zM1322.5 647h3v3h-3zM1328 527h3v3h-3zM1328 532h3v3h-3zM1328 538h3v3h-3zM1328 543h3v3h-3zM1328 553h3v3h-3zM1328 558h3v3h-3zM1328 564h3v3h-3zM1328 569h3v3h-3zM1328 579h3v3h-3zM1328 584h3v3h-3zM1328 590h3v3h-3zM1328 595h3v3h-3zM1328 605h3v3h-3zM1328 610h3v3h-3zM1328 616h3v3h-3zM1328 621h3v3h-3zM1328 631h3v3h-3zM1328 636h3v3h-3zM1328 642h3v3h-3zM1328 647h3v3h-3zM1333.5 527h3v3h-3zM1333.5 532h3v3h-3zM1333.5 538h3v3h-3zM1333.5 543h3v3h-3zM1333.5 553h3v3h-3zM1333.5 558h3v3h-3zM1333.5 564h3v3h-3zM1333.5 569h3v3h-3zM1333.5 579h3v3h-3zM1333.5 584h3v3h-3zM1333.5 590h3v3h-3zM1333.5 595h3v3h-3zM1333.5 605h3v3h-3zM1333.5 610h3v3h-3zM1333.5 616h3v3h-3zM1333.5 621h3v3h-3zM1333.5 631h3v3h-3zM1333.5 636h3v3h-3zM1333.5 642h3v3h-3zM1333.5 647h3v3h-3zM1339 527h3v3h-3zM1339 532h3v3h-3zM1339 538h3v3h-3zM1339 543h3v3h-3zM1339 553h3v3h-3zM1339 558h3v3h-3zM1339 564h3v3h-3zM1339 569h3v3h-3zM1339 579h3v3h-3zM1339 584h3v3h-3zM1339 590h3v3h-3zM1339 595h3v3h-3zM1339 605h3v3h-3zM1339 610h3v3h-3zM1339 616h3v3h-3zM1339 621h3v3h-3zM1339 631h3v3h-3zM1339 636h3v3h-3zM1339 642h3v3h-3zM1339 647h3v3h-3zM1344.5 527h3v3h-3zM1344.5 532h3v3h-3zM1344.5 538h3v3h-3zM1344.5 543h3v3h-3zM1344.5 553h3v3h-3zM1344.5 558h3v3h-3zM1344.5 564h3v3h-3zM1344.5 569h3v3h-3zM1344.5 579h3v3h-3zM1344.5 584h3v3h-3zM1344.5 590h3v3h-3zM1344.5 595h3v3h-3zM1344.5 605h3v3h-3zM1344.5 610h3v3h-3zM1344.5 616h3v3h-3zM1344.5 621h3v3h-3zM1344.5 631h3v3h-3zM1344.5 636h3v3h-3zM1344.5 642h3v3h-3zM1344.5 647h3v3h-3zM1350 527h3v3h-3zM1350 532h3v3h-3zM1350 538h3v3h-3zM1350 543h3v3h-3zM1350 553h3v3h-3zM1350 558h3v3h-3zM1350 564h3v3h-3zM1350 569h3v3h-3zM1350 579h3v3h-3zM1350 584h3v3h-3zM1350 590h3v3h-3zM1350 595h3v3h-3zM1350 605h3v3h-3zM1350 610h3v3h-3zM1350 616h3v3h-3zM1350 621h3v3h-3zM1350 631h3v3h-3zM1350 636h3v3h-3zM1350 642h3v3h-3zM1350 647h3v3h-3zM1355.5 527h3v3h-3zM1355.5 532h3v3h-3zM1355.5 538h3v3h-3zM1355.5 543h3v3h-3zM1355.5 553h3v3h-3zM1355.5 558h3v3h-3zM1355.5 564h3v3h-3zM1355.5 569h3v3h-3zM1355.5 579h3v3h-3zM1355.5 584h3v3h-3zM1355.5 590h3v3h-3zM1355.5 595h3v3h-3zM1355.5 605h3v3h-3zM1355.5 610h3v3h-3zM1355.5 616h3v3h-3zM1355.5 621h3v3h-3zM1355.5 631h3v3h-3zM1355.5 636h3v3h-3zM1355.5 642h3v3h-3zM1355.5 647h3v3h-3zM1361 527h3v3h-3zM1361 532h3v3h-3zM1361 538h3v3h-3zM1361 543h3v3h-3zM1361 553h3v3h-3zM1361 558h3v3h-3zM1361 564h3v3h-3zM1361 569h3v3h-3zM1361 579h3v3h-3zM1361 584h3v3h-3zM1361 590h3v3h-3zM1361 595h3v3h-3zM1361 605h3v3h-3zM1361 610h3v3h-3zM1361 616h3v3h-3zM1361 621h3v3h-3zM1361 631h3v3h-3zM1361 636h3v3h-3zM1361 642h3v3h-3zM1361 647h3v3h-3zM1366.5 527h3v3h-3zM1366.5 532h3v3h-3zM1366.5 538h3v3h-3zM1366.5 543h3v3h-3zM1366.5 553h3v3h-3zM1366.5 558h3v3h-3zM1366.5 564h3v3h-3zM1366.5 569h3v3h-3zM1366.5 579h3v3h-3zM1366.5 584h3v3h-3zM1366.5 590h3v3h-3zM1366.5 595h3v3h-3zM1366.5 605h3v3h-3zM1366.5 610h3v3h-3zM1366.5 616h3v3h-3zM1366.5 621h3v3h-3zM1366.5 631h3v3h-3zM1366.5 636h3v3h-3zM1366.5 642h3v3h-3zM1366.5 647h3v3h-3zM1372 527h3v3h-3zM1372 532h3v3h-3zM1372 538h3v3h-3zM1372 543h3v3h-3zM1372 553h3v3h-3zM1372 558h3v3h-3zM1372 564h3v3h-3zM1372 569h3v3h-3zM1372 579h3v3h-3zM1372 584h3v3h-3zM1372 590h3v3h-3zM1372 595h3v3h-3zM1372 605h3v3h-3zM1372 610h3v3h-3zM1372 616h3v3h-3zM1372 621h3v3h-3zM1372 631h3v3h-3zM1372 636h3v3h-3zM1372 642h3v3h-3zM1372 647h3v3h-3zM1377.5 527h3v3h-3zM1377.5 532h3v3h-3zM1377.5 538h3v3h-3zM1377.5 543h3v3h-3zM1377.5 553h3v3h-3zM1377.5 558h3v3h-3zM1377.5 564h3v3h-3zM1377.5 569h3v3h-3zM1377.5 579h3v3h-3zM1377.5 584h3v3h-3zM1377.5 590h3v3h-3zM1377.5 595h3v3h-3zM1377.5 605h3v3h-3zM1377.5 610h3v3h-3zM1377.5 616h3v3h-3zM1377.5 621h3v3h-3zM1377.5 631h3v3h-3zM1377.5 636h3v3h-3zM1377.5 642h3v3h-3zM1377.5 647h3v3h-3zM1383 527h3v3h-3zM1383 532h3v3h-3zM1383 538h3v3h-3zM1383 543h3v3h-3zM1383 553h3v3h-3zM1383 558h3v3h-3zM1383 564h3v3h-3zM1383 569h3v3h-3zM1383 579h3v3h-3zM1383 584h3v3h-3zM1383 590h3v3h-3zM1383 595h3v3h-3zM1383 605h3v3h-3zM1383 610h3v3h-3zM1383 616h3v3h-3zM1383 621h3v3h-3zM1383 631h3v3h-3zM1383 636h3v3h-3zM1383 642h3v3h-3zM1383 647h3v3h-3zM1388.5 527h3v3h-3zM1388.5 532h3v3h-3zM1388.5 538h3v3h-3zM1388.5 543h3v3h-3zM1388.5 553h3v3h-3zM1388.5 558h3v3h-3zM1388.5 564h3v3h-3zM1388.5 569h3v3h-3zM1388.5 579h3v3h-3zM1388.5 584h3v3h-3zM1388.5 590h3v3h-3zM1388.5 595h3v3h-3zM1388.5 605h3v3h-3zM1388.5 610h3v3h-3zM1388.5 616h3v3h-3zM1388.5 621h3v3h-3zM1388.5 631h3v3h-3zM1388.5 636h3v3h-3zM1388.5 642h3v3h-3zM1388.5 647h3v3h-3zM1394 527h3v3h-3zM1394 532h3v3h-3zM1394 538h3v3h-3zM1394 543h3v3h-3zM1394 553h3v3h-3zM1394 558h3v3h-3zM1394 564h3v3h-3zM1394 569h3v3h-3zM1394 579h3v3h-3zM1394 584h3v3h-3zM1394 590h3v3h-3zM1394 595h3v3h-3zM1394 605h3v3h-3zM1394 610h3v3h-3zM1394 616h3v3h-3zM1394 621h3v3h-3zM1394 631h3v3h-3zM1394 636h3v3h-3zM1394 642h3v3h-3zM1394 647h3v3h-3zM1399.5 527h3v3h-3zM1399.5 532h3v3h-3zM1399.5 538h3v3h-3zM1399.5 543h3v3h-3zM1399.5 553h3v3h-3zM1399.5 558h3v3h-3zM1399.5 564h3v3h-3zM1399.5 569h3v3h-3zM1399.5 579h3v3h-3zM1399.5 584h3v3h-3zM1399.5 590h3v3h-3zM1399.5 595h3v3h-3zM1399.5 605h3v3h-3zM1399.5 610h3v3h-3zM1399.5 616h3v3h-3zM1399.5 621h3v3h-3zM1399.5 631h3v3h-3zM1399.5 636h3v3h-3zM1399.5 642h3v3h-3zM1399.5 647h3v3h-3zM1405 527h3v3h-3zM1405 532h3v3h-3zM1405 538h3v3h-3zM1405 543h3v3h-3zM1405 553h3v3h-3zM1405 558h3v3h-3zM1405 564h3v3h-3zM1405 569h3v3h-3zM1405 579h3v3h-3zM1405 584h3v3h-3zM1405 590h3v3h-3zM1405 595h3v3h-3zM1405 605h3v3h-3zM1405 610h3v3h-3zM1405 616h3v3h-3zM1405 621h3v3h-3zM1405 631h3v3h-3zM1405 636h3v3h-3zM1405 642h3v3h-3zM1405 647h3v3h-3zM1410.5 527h3v3h-3zM1410.5 532h3v3h-3zM1410.5 538h3v3h-3zM1410.5 543h3v3h-3zM1410.5 553h3v3h-3zM1410.5 558h3v3h-3zM1410.5 564h3v3h-3zM1410.5 569h3v3h-3zM1410.5 579h3v3h-3zM1410.5 584h3v3h-3zM1410.5 590h3v3h-3zM1410.5 595h3v3h-3zM1410.5 605h3v3h-3zM1410.5 610h3v3h-3zM1410.5 616h3v3h-3zM1410.5 621h3v3h-3zM1410.5 631h3v3h-3zM1410.5 636h3v3h-3zM1410.5 642h3v3h-3zM1410.5 647h3v3h-3zM1416 527h3v3h-3zM1416 532h3v3h-3zM1416 538h3v3h-3zM1416 543h3v3h-3zM1416 553h3v3h-3zM1416 558h3v3h-3zM1416 564h3v3h-3zM1416 569h3v3h-3zM1416 579h3v3h-3zM1416 584h3v3h-3zM1416 590h3v3h-3zM1416 595h3v3h-3zM1416 605h3v3h-3zM1416 610h3v3h-3zM1416 616h3v3h-3zM1416 621h3v3h-3zM1416 631h3v3h-3zM1416 636h3v3h-3zM1416 642h3v3h-3zM1416 647h3v3h-3zM1421.5 527h3v3h-3zM1421.5 532h3v3h-3zM1421.5 538h3v3h-3zM1421.5 543h3v3h-3zM1421.5 553h3v3h-3zM1421.5 558h3v3h-3zM1421.5 564h3v3h-3zM1421.5 569h3v3h-3zM1421.5 579h3v3h-3zM1421.5 584h3v3h-3zM1421.5 590h3v3h-3zM1421.5 595h3v3h-3zM1421.5 605h3v3h-3zM1421.5 610h3v3h-3zM1421.5 616h3v3h-3zM1421.5 621h3v3h-3zM1421.5 631h3v3h-3zM1421.5 636h3v3h-3zM1421.5 642h3v3h-3zM1421.5 647h3v3h-3zM1427 527h3v3h-3zM1427 532h3v3h-3zM1427 538h3v3h-3zM1427 543h3v3h-3zM1427 553h3v3h-3zM1427 558h3v3h-3zM1427 564h3v3h-3zM1427 569h3v3h-3zM1427 579h3v3h-3zM1427 584h3v3h-3zM1427 590h3v3h-3zM1427 595h3v3h-3zM1427 605h3v3h-3zM1427 610h3v3h-3zM1427 616h3v3h-3zM1427 621h3v3h-3zM1427 631h3v3h-3zM1427 636h3v3h-3zM1427 642h3v3h-3zM1427 647h3v3h-3zM1432.5 527h3v3h-3zM1432.5 532h3v3h-3zM1432.5 538h3v3h-3zM1432.5 543h3v3h-3zM1432.5 553h3v3h-3zM1432.5 558h3v3h-3zM1432.5 564h3v3h-3zM1432.5 569h3v3h-3zM1432.5 579h3v3h-3zM1432.5 584h3v3h-3zM1432.5 590h3v3h-3zM1432.5 595h3v3h-3zM1432.5 605h3v3h-3zM1432.5 610h3v3h-3zM1432.5 616h3v3h-3zM1432.5 621h3v3h-3zM1432.5 631h3v3h-3zM1432.5 636h3v3h-3zM1432.5 642h3v3h-3zM1432.5 647h3v3h-3zM1438 527h3v3h-3zM1438 532h3v3h-3zM1438 538h3v3h-3zM1438 543h3v3h-3zM1438 553h3v3h-3zM1438 558h3v3h-3zM1438 564h3v3h-3zM1438 569h3v3h-3zM1438 579h3v3h-3zM1438 584h3v3h-3zM1438 590h3v3h-3zM1438 595h3v3h-3zM1438 605h3v3h-3zM1438 610h3v3h-3zM1438 616h3v3h-3zM1438 621h3v3h-3zM1438 631h3v3h-3zM1438 636h3v3h-3zM1438 642h3v3h-3zM1438 647h3v3h-3zM1443.5 527h3v3h-3zM1443.5 532h3v3h-3zM1443.5 538h3v3h-3zM1443.5 543h3v3h-3zM1443.5 553h3v3h-3zM1443.5 558h3v3h-3zM1443.5 564h3v3h-3zM1443.5 569h3v3h-3zM1443.5 579h3v3h-3zM1443.5 584h3v3h-3zM1443.5 590h3v3h-3zM1443.5 595h3v3h-3zM1443.5 605h3v3h-3zM1443.5 610h3v3h-3zM1443.5 616h3v3h-3zM1443.5 621h3v3h-3zM1443.5 631h3v3h-3zM1443.5 636h3v3h-3zM1443.5 642h3v3h-3zM1443.5 647h3v3h-3zM1449 527h3v3h-3zM1449 532h3v3h-3zM1449 538h3v3h-3zM1449 543h3v3h-3zM1449 553h3v3h-3zM1449 558h3v3h-3zM1449 564h3v3h-3zM1449 569h3v3h-3zM1449 579h3v3h-3zM1449 584h3v3h-3zM1449 590h3v3h-3zM1449 595h3v3h-3zM1449 605h3v3h-3zM1449 610h3v3h-3zM1449 616h3v3h-3zM1449 621h3v3h-3zM1449 631h3v3h-3zM1449 636h3v3h-3zM1449 642h3v3h-3zM1449 647h3v3h-3zM1454.5 527h3v3h-3zM1454.5 532h3v3h-3zM1454.5 538h3v3h-3zM1454.5 543h3v3h-3zM1454.5 553h3v3h-3zM1454.5 558h3v3h-3zM1454.5 564h3v3h-3zM1454.5 569h3v3h-3zM1454.5 579h3v3h-3zM1454.5 584h3v3h-3zM1454.5 590h3v3h-3zM1454.5 595h3v3h-3zM1454.5 605h3v3h-3zM1454.5 610h3v3h-3zM1454.5 616h3v3h-3zM1454.5 621h3v3h-3zM1454.5 631h3v3h-3zM1454.5 636h3v3h-3zM1454.5 642h3v3h-3zM1454.5 647h3v3h-3zM1460 527h3v3h-3zM1460 532h3v3h-3zM1460 538h3v3h-3zM1460 543h3v3h-3zM1460 553h3v3h-3zM1460 558h3v3h-3zM1460 564h3v3h-3zM1460 569h3v3h-3zM1460 579h3v3h-3zM1460 584h3v3h-3zM1460 590h3v3h-3zM1460 595h3v3h-3zM1460 605h3v3h-3zM1460 610h3v3h-3zM1460 616h3v3h-3zM1460 621h3v3h-3zM1460 631h3v3h-3zM1460 636h3v3h-3zM1460 642h3v3h-3zM1460 647h3v3h-3zM1465.5 527h3v3h-3zM1465.5 532h3v3h-3zM1465.5 538h3v3h-3zM1465.5 543h3v3h-3zM1465.5 553h3v3h-3zM1465.5 558h3v3h-3zM1465.5 564h3v3h-3zM1465.5 569h3v3h-3zM1465.5 579h3v3h-3zM1465.5 584h3v3h-3zM1465.5 590h3v3h-3zM1465.5 595h3v3h-3zM1465.5 605h3v3h-3zM1465.5 610h3v3h-3zM1465.5 616h3v3h-3zM1465.5 621h3v3h-3zM1465.5 631h3v3h-3zM1465.5 636h3v3h-3zM1465.5 642h3v3h-3zM1465.5 647h3v3h-3zM1471 527h3v3h-3zM1471 532h3v3h-3zM1471 538h3v3h-3zM1471 543h3v3h-3zM1471 553h3v3h-3zM1471 558h3v3h-3zM1471 564h3v3h-3zM1471 569h3v3h-3zM1471 579h3v3h-3zM1471 584h3v3h-3zM1471 590h3v3h-3zM1471 595h3v3h-3zM1471 605h3v3h-3zM1471 610h3v3h-3zM1471 616h3v3h-3zM1471 621h3v3h-3zM1471 631h3v3h-3zM1471 636h3v3h-3zM1471 642h3v3h-3zM1471 647h3v3h-3zM1476.5 527h3v3h-3zM1476.5 532h3v3h-3zM1476.5 538h3v3h-3zM1476.5 543h3v3h-3zM1476.5 553h3v3h-3zM1476.5 558h3v3h-3zM1476.5 564h3v3h-3zM1476.5 569h3v3h-3zM1476.5 579h3v3h-3zM1476.5 584h3v3h-3zM1476.5 590h3v3h-3zM1476.5 595h3v3h-3zM1476.5 605h3v3h-3zM1476.5 610h3v3h-3zM1476.5 616h3v3h-3zM1476.5 621h3v3h-3zM1476.5 631h3v3h-3zM1476.5 636h3v3h-3zM1476.5 642h3v3h-3zM1476.5 647h3v3h-3zM1482 527h3v3h-3zM1482 532h3v3h-3zM1482 538h3v3h-3zM1482 543h3v3h-3zM1482 553h3v3h-3zM1482 558h3v3h-3zM1482 564h3v3h-3zM1482 569h3v3h-3zM1482 579h3v3h-3zM1482 584h3v3h-3zM1482 590h3v3h-3zM1482 595h3v3h-3zM1482 605h3v3h-3zM1482 610h3v3h-3zM1482 616h3v3h-3zM1482 621h3v3h-3zM1482 631h3v3h-3zM1482 636h3v3h-3zM1482 642h3v3h-3zM1482 647h3v3h-3zM1487.5 527h3v3h-3zM1487.5 532h3v3h-3zM1487.5 538h3v3h-3zM1487.5 543h3v3h-3zM1487.5 553h3v3h-3zM1487.5 558h3v3h-3zM1487.5 564h3v3h-3zM1487.5 569h3v3h-3zM1487.5 579h3v3h-3zM1487.5 584h3v3h-3zM1487.5 590h3v3h-3zM1487.5 595h3v3h-3zM1487.5 605h3v3h-3zM1487.5 610h3v3h-3zM1487.5 616h3v3h-3zM1487.5 621h3v3h-3zM1487.5 631h3v3h-3zM1487.5 636h3v3h-3zM1487.5 642h3v3h-3zM1487.5 647h3v3h-3zM1493 527h3v3h-3zM1493 532h3v3h-3zM1493 538h3v3h-3zM1493 543h3v3h-3zM1493 553h3v3h-3zM1493 558h3v3h-3zM1493 564h3v3h-3zM1493 569h3v3h-3zM1493 579h3v3h-3zM1493 584h3v3h-3zM1493 590h3v3h-3zM1493 595h3v3h-3zM1493 605h3v3h-3zM1493 610h3v3h-3zM1493 616h3v3h-3zM1493 621h3v3h-3zM1493 631h3v3h-3zM1493 636h3v3h-3zM1493 642h3v3h-3zM1493 647h3v3h-3zM1498.5 527h3v3h-3zM1498.5 532h3v3h-3zM1498.5 538h3v3h-3zM1498.5 543h3v3h-3zM1498.5 553h3v3h-3zM1498.5 558h3v3h-3zM1498.5 564h3v3h-3zM1498.5 569h3v3h-3zM1498.5 579h3v3h-3zM1498.5 584h3v3h-3zM1498.5 590h3v3h-3zM1498.5 595h3v3h-3zM1498.5 605h3v3h-3zM1498.5 610h3v3h-3zM1498.5 616h3v3h-3zM1498.5 621h3v3h-3zM1498.5 631h3v3h-3zM1498.5 636h3v3h-3zM1498.5 642h3v3h-3zM1498.5 647h3v3h-3zM1504 527h3v3h-3zM1504 532h3v3h-3zM1504 538h3v3h-3zM1504 543h3v3h-3zM1504 553h3v3h-3zM1504 558h3v3h-3zM1504 564h3v3h-3zM1504 569h3v3h-3zM1504 579h3v3h-3zM1504 584h3v3h-3zM1504 590h3v3h-3zM1504 595h3v3h-3zM1504 605h3v3h-3zM1504 610h3v3h-3zM1504 616h3v3h-3zM1504 621h3v3h-3zM1504 631h3v3h-3zM1504 636h3v3h-3zM1504 642h3v3h-3zM1504 647h3v3h-3zM1509.5 527h3v3h-3zM1509.5 532h3v3h-3zM1509.5 538h3v3h-3zM1509.5 543h3v3h-3zM1509.5 553h3v3h-3zM1509.5 558h3v3h-3zM1509.5 564h3v3h-3zM1509.5 569h3v3h-3zM1509.5 579h3v3h-3zM1509.5 584h3v3h-3zM1509.5 590h3v3h-3zM1509.5 595h3v3h-3zM1509.5 605h3v3h-3zM1509.5 610h3v3h-3zM1509.5 616h3v3h-3zM1509.5 621h3v3h-3zM1509.5 631h3v3h-3zM1509.5 636h3v3h-3zM1509.5 642h3v3h-3zM1509.5 647h3v3h-3zM1515 527h3v3h-3zM1515 532h3v3h-3zM1515 538h3v3h-3zM1515 543h3v3h-3zM1515 553h3v3h-3zM1515 558h3v3h-3zM1515 564h3v3h-3zM1515 569h3v3h-3zM1515 579h3v3h-3zM1515 584h3v3h-3zM1515 590h3v3h-3zM1515 595h3v3h-3zM1515 605h3v3h-3zM1515 610h3v3h-3zM1515 616h3v3h-3zM1515 621h3v3h-3zM1515 631h3v3h-3zM1515 636h3v3h-3zM1515 642h3v3h-3zM1515 647h3v3h-3zM1520.5 527h3v3h-3zM1520.5 532h3v3h-3zM1520.5 538h3v3h-3zM1520.5 543h3v3h-3zM1520.5 553h3v3h-3zM1520.5 558h3v3h-3zM1520.5 564h3v3h-3zM1520.5 569h3v3h-3zM1520.5 579h3v3h-3zM1520.5 584h3v3h-3zM1520.5 590h3v3h-3zM1520.5 595h3v3h-3zM1520.5 605h3v3h-3zM1520.5 610h3v3h-3zM1520.5 616h3v3h-3zM1520.5 621h3v3h-3zM1520.5 631h3v3h-3zM1520.5 636h3v3h-3zM1520.5 642h3v3h-3zM1520.5 647h3v3h-3zM1526 527h3v3h-3zM1526 532h3v3h-3zM1526 538h3v3h-3zM1526 543h3v3h-3zM1526 553h3v3h-3zM1526 558h3v3h-3zM1526 564h3v3h-3zM1526 569h3v3h-3zM1526 579h3v3h-3zM1526 584h3v3h-3zM1526 590h3v3h-3zM1526 595h3v3h-3zM1526 605h3v3h-3zM1526 610h3v3h-3zM1526 616h3v3h-3zM1526 621h3v3h-3zM1526 631h3v3h-3zM1526 636h3v3h-3zM1526 642h3v3h-3zM1526 647h3v3h-3zM1531.5 527h3v3h-3zM1531.5 532h3v3h-3zM1531.5 538h3v3h-3zM1531.5 543h3v3h-3zM1531.5 553h3v3h-3zM1531.5 558h3v3h-3zM1531.5 564h3v3h-3zM1531.5 569h3v3h-3zM1531.5 579h3v3h-3zM1531.5 584h3v3h-3zM1531.5 590h3v3h-3zM1531.5 595h3v3h-3zM1531.5 605h3v3h-3zM1531.5 610h3v3h-3zM1531.5 616h3v3h-3zM1531.5 621h3v3h-3zM1531.5 631h3v3h-3zM1531.5 636h3v3h-3zM1531.5 642h3v3h-3zM1531.5 647h3v3h-3zM1537 527h3v3h-3zM1537 532h3v3h-3zM1537 538h3v3h-3zM1537 543h3v3h-3zM1537 553h3v3h-3zM1537 558h3v3h-3zM1537 564h3v3h-3zM1537 569h3v3h-3zM1537 579h3v3h-3zM1537 584h3v3h-3zM1537 590h3v3h-3zM1537 595h3v3h-3zM1537 605h3v3h-3zM1537 610h3v3h-3zM1537 616h3v3h-3zM1537 621h3v3h-3zM1537 631h3v3h-3zM1537 636h3v3h-3zM1537 642h3v3h-3zM1537 647h3v3h-3zM1542.5 527h3v3h-3zM1542.5 532h3v3h-3zM1542.5 538h3v3h-3zM1542.5 543h3v3h-3zM1542.5 553h3v3h-3zM1542.5 558h3v3h-3zM1542.5 564h3v3h-3zM1542.5 569h3v3h-3zM1542.5 579h3v3h-3zM1542.5 584h3v3h-3zM1542.5 590h3v3h-3zM1542.5 595h3v3h-3zM1542.5 605h3v3h-3zM1542.5 610h3v3h-3zM1542.5 616h3v3h-3zM1542.5 621h3v3h-3zM1542.5 631h3v3h-3zM1542.5 636h3v3h-3zM1542.5 642h3v3h-3zM1542.5 647h3v3h-3zM1548 527h3v3h-3zM1548 532h3v3h-3zM1548 538h3v3h-3zM1548 543h3v3h-3zM1548 553h3v3h-3zM1548 558h3v3h-3zM1548 564h3v3h-3zM1548 569h3v3h-3zM1548 579h3v3h-3zM1548 584h3v3h-3zM1548 590h3v3h-3zM1548 595h3v3h-3zM1548 605h3v3h-3zM1548 610h3v3h-3zM1548 616h3v3h-3zM1548 621h3v3h-3zM1548 631h3v3h-3zM1548 636h3v3h-3zM1548 642h3v3h-3zM1548 647h3v3h-3zM1553.5 527h3v3h-3zM1553.5 532h3v3h-3zM1553.5 538h3v3h-3zM1553.5 543h3v3h-3zM1553.5 553h3v3h-3zM1553.5 558h3v3h-3zM1553.5 564h3v3h-3zM1553.5 569h3v3h-3zM1553.5 579h3v3h-3zM1553.5 584h3v3h-3zM1553.5 590h3v3h-3zM1553.5 595h3v3h-3zM1553.5 605h3v3h-3zM1553.5 610h3v3h-3zM1553.5 616h3v3h-3zM1553.5 621h3v3h-3zM1553.5 631h3v3h-3zM1553.5 636h3v3h-3zM1553.5 642h3v3h-3zM1553.5 647h3v3h-3zM1559 527h3v3h-3zM1559 532h3v3h-3zM1559 538h3v3h-3zM1559 543h3v3h-3zM1559 553h3v3h-3zM1559 558h3v3h-3zM1559 564h3v3h-3zM1559 569h3v3h-3zM1559 579h3v3h-3zM1559 584h3v3h-3zM1559 590h3v3h-3zM1559 595h3v3h-3zM1559 605h3v3h-3zM1559 610h3v3h-3zM1559 616h3v3h-3zM1559 621h3v3h-3zM1559 631h3v3h-3zM1559 636h3v3h-3zM1559 642h3v3h-3zM1559 647h3v3h-3zM1564.5 527h3v3h-3zM1564.5 532h3v3h-3zM1564.5 538h3v3h-3zM1564.5 543h3v3h-3zM1564.5 553h3v3h-3zM1564.5 558h3v3h-3zM1564.5 564h3v3h-3zM1564.5 569h3v3h-3zM1564.5 579h3v3h-3zM1564.5 584h3v3h-3zM1564.5 590h3v3h-3zM1564.5 595h3v3h-3zM1564.5 605h3v3h-3zM1564.5 610h3v3h-3zM1564.5 616h3v3h-3zM1564.5 621h3v3h-3zM1564.5 631h3v3h-3zM1564.5 636h3v3h-3zM1564.5 642h3v3h-3zM1564.5 647h3v3h-3zM1570 527h3v3h-3zM1570 532h3v3h-3zM1570 538h3v3h-3zM1570 543h3v3h-3zM1570 553h3v3h-3zM1570 558h3v3h-3zM1570 564h3v3h-3zM1570 569h3v3h-3zM1570 579h3v3h-3zM1570 584h3v3h-3zM1570 590h3v3h-3zM1570 595h3v3h-3zM1570 605h3v3h-3zM1570 610h3v3h-3zM1570 616h3v3h-3zM1570 621h3v3h-3zM1570 631h3v3h-3zM1570 636h3v3h-3zM1570 642h3v3h-3zM1570 647h3v3h-3zM1575.5 527h3v3h-3zM1575.5 532h3v3h-3zM1575.5 538h3v3h-3zM1575.5 543h3v3h-3zM1575.5 553h3v3h-3zM1575.5 558h3v3h-3zM1575.5 564h3v3h-3zM1575.5 569h3v3h-3zM1575.5 579h3v3h-3zM1575.5 584h3v3h-3zM1575.5 590h3v3h-3zM1575.5 595h3v3h-3zM1575.5 605h3v3h-3zM1575.5 610h3v3h-3zM1575.5 616h3v3h-3zM1575.5 621h3v3h-3zM1575.5 631h3v3h-3zM1575.5 636h3v3h-3zM1575.5 642h3v3h-3zM1575.5 647h3v3h-3zM1581 527h3v3h-3zM1581 532h3v3h-3zM1581 538h3v3h-3zM1581 543h3v3h-3zM1581 553h3v3h-3zM1581 558h3v3h-3zM1581 564h3v3h-3zM1581 569h3v3h-3zM1581 579h3v3h-3zM1581 584h3v3h-3zM1581 590h3v3h-3zM1581 595h3v3h-3zM1581 605h3v3h-3zM1581 610h3v3h-3zM1581 616h3v3h-3zM1581 621h3v3h-3zM1581 631h3v3h-3zM1581 636h3v3h-3zM1581 642h3v3h-3zM1581 647h3v3h-3zM1586.5 527h3v3h-3zM1586.5 532h3v3h-3zM1586.5 538h3v3h-3zM1586.5 543h3v3h-3zM1586.5 553h3v3h-3zM1586.5 558h3v3h-3zM1586.5 564h3v3h-3zM1586.5 569h3v3h-3zM1586.5 579h3v3h-3zM1586.5 584h3v3h-3zM1586.5 590h3v3h-3zM1586.5 595h3v3h-3zM1586.5 605h3v3h-3zM1586.5 610h3v3h-3zM1586.5 616h3v3h-3zM1586.5 621h3v3h-3zM1586.5 631h3v3h-3zM1586.5 636h3v3h-3zM1586.5 642h3v3h-3zM1586.5 647h3v3h-3zM1592 527h3v3h-3zM1592 532h3v3h-3zM1592 538h3v3h-3zM1592 543h3v3h-3zM1592 553h3v3h-3zM1592 558h3v3h-3zM1592 564h3v3h-3zM1592 569h3v3h-3zM1592 579h3v3h-3zM1592 584h3v3h-3zM1592 590h3v3h-3zM1592 595h3v3h-3zM1592 605h3v3h-3zM1592 610h3v3h-3zM1592 616h3v3h-3zM1592 621h3v3h-3zM1592 631h3v3h-3zM1592 636h3v3h-3zM1592 642h3v3h-3zM1592 647h3v3h-3zM1597.5 527h3v3h-3zM1597.5 532h3v3h-3zM1597.5 538h3v3h-3zM1597.5 543h3v3h-3zM1597.5 553h3v3h-3zM1597.5 558h3v3h-3zM1597.5 564h3v3h-3zM1597.5 569h3v3h-3zM1597.5 579h3v3h-3zM1597.5 584h3v3h-3zM1597.5 590h3v3h-3zM1597.5 595h3v3h-3zM1597.5 605h3v3h-3zM1597.5 610h3v3h-3zM1597.5 616h3v3h-3zM1597.5 621h3v3h-3zM1597.5 631h3v3h-3zM1597.5 636h3v3h-3zM1597.5 642h3v3h-3zM1597.5 647h3v3h-3zM1603 527h3v3h-3zM1603 532h3v3h-3zM1603 538h3v3h-3zM1603 543h3v3h-3zM1603 553h3v3h-3zM1603 558h3v3h-3zM1603 564h3v3h-3zM1603 569h3v3h-3zM1603 579h3v3h-3zM1603 584h3v3h-3zM1603 590h3v3h-3zM1603 595h3v3h-3zM1603 605h3v3h-3zM1603 610h3v3h-3zM1603 616h3v3h-3zM1603 621h3v3h-3zM1603 631h3v3h-3zM1603 636h3v3h-3zM1603 642h3v3h-3zM1603 647h3v3h-3zM1608.5 527h3v3h-3zM1608.5 532h3v3h-3zM1608.5 538h3v3h-3zM1608.5 543h3v3h-3zM1608.5 553h3v3h-3zM1608.5 558h3v3h-3zM1608.5 564h3v3h-3zM1608.5 569h3v3h-3zM1608.5 579h3v3h-3zM1608.5 584h3v3h-3zM1608.5 590h3v3h-3zM1608.5 595h3v3h-3zM1608.5 605h3v3h-3zM1608.5 610h3v3h-3zM1608.5 616h3v3h-3zM1608.5 621h3v3h-3zM1608.5 631h3v3h-3zM1608.5 636h3v3h-3zM1608.5 642h3v3h-3zM1608.5 647h3v3h-3zM1614 527h3v3h-3zM1614 532h3v3h-3zM1614 538h3v3h-3zM1614 543h3v3h-3zM1614 553h3v3h-3zM1614 558h3v3h-3zM1614 564h3v3h-3zM1614 569h3v3h-3zM1614 579h3v3h-3zM1614 584h3v3h-3zM1614 590h3v3h-3zM1614 595h3v3h-3zM1614 605h3v3h-3zM1614 610h3v3h-3zM1614 616h3v3h-3zM1614 621h3v3h-3zM1614 631h3v3h-3zM1614 636h3v3h-3zM1614 642h3v3h-3zM1614 647h3v3h-3zM1619.5 527h3v3h-3zM1619.5 532h3v3h-3zM1619.5 538h3v3h-3zM1619.5 543h3v3h-3zM1619.5 553h3v3h-3zM1619.5 558h3v3h-3zM1619.5 564h3v3h-3zM1619.5 569h3v3h-3zM1619.5 579h3v3h-3zM1619.5 584h3v3h-3zM1619.5 590h3v3h-3zM1619.5 595h3v3h-3zM1619.5 605h3v3h-3zM1619.5 610h3v3h-3zM1619.5 616h3v3h-3zM1619.5 621h3v3h-3zM1619.5 631h3v3h-3zM1619.5 636h3v3h-3zM1619.5 642h3v3h-3zM1619.5 647h3v3h-3zM1625 527h3v3h-3zM1625 532h3v3h-3zM1625 538h3v3h-3zM1625 543h3v3h-3zM1625 553h3v3h-3zM1625 558h3v3h-3zM1625 564h3v3h-3zM1625 569h3v3h-3zM1625 579h3v3h-3zM1625 584h3v3h-3zM1625 590h3v3h-3zM1625 595h3v3h-3zM1625 605h3v3h-3zM1625 610h3v3h-3zM1625 616h3v3h-3zM1625 621h3v3h-3zM1625 631h3v3h-3zM1625 636h3v3h-3zM1625 642h3v3h-3zM1625 647h3v3h-3zM1630.5 527h3v3h-3zM1630.5 532h3v3h-3zM1630.5 538h3v3h-3zM1630.5 543h3v3h-3zM1630.5 553h3v3h-3zM1630.5 558h3v3h-3zM1630.5 564h3v3h-3zM1630.5 569h3v3h-3zM1630.5 579h3v3h-3zM1630.5 584h3v3h-3zM1630.5 590h3v3h-3zM1630.5 595h3v3h-3zM1630.5 605h3v3h-3zM1630.5 610h3v3h-3zM1630.5 616h3v3h-3zM1630.5 621h3v3h-3zM1630.5 631h3v3h-3zM1630.5 636h3v3h-3zM1630.5 642h3v3h-3zM1630.5 647h3v3h-3zM1636 527h3v3h-3zM1636 532h3v3h-3zM1636 538h3v3h-3zM1636 543h3v3h-3zM1636 553h3v3h-3zM1636 558h3v3h-3zM1636 564h3v3h-3zM1636 569h3v3h-3zM1636 579h3v3h-3zM1636 584h3v3h-3zM1636 590h3v3h-3zM1636 595h3v3h-3zM1636 605h3v3h-3zM1636 610h3v3h-3zM1636 616h3v3h-3zM1636 621h3v3h-3zM1636 631h3v3h-3zM1636 636h3v3h-3zM1636 642h3v3h-3zM1636 647h3v3h-3zM1641.5 527h3v3h-3zM1641.5 532h3v3h-3zM1641.5 538h3v3h-3zM1641.5 543h3v3h-3zM1641.5 553h3v3h-3zM1641.5 558h3v3h-3zM1641.5 564h3v3h-3zM1641.5 569h3v3h-3zM1641.5 579h3v3h-3zM1641.5 584h3v3h-3zM1641.5 590h3v3h-3zM1641.5 595h3v3h-3zM1641.5 605h3v3h-3zM1641.5 610h3v3h-3zM1641.5 616h3v3h-3zM1641.5 621h3v3h-3zM1641.5 631h3v3h-3zM1641.5 636h3v3h-3zM1641.5 642h3v3h-3zM1641.5 647h3v3h-3zM1647 527h3v3h-3zM1647 532h3v3h-3zM1647 538h3v3h-3zM1647 543h3v3h-3zM1647 553h3v3h-3zM1647 558h3v3h-3zM1647 564h3v3h-3zM1647 569h3v3h-3zM1647 579h3v3h-3zM1647 584h3v3h-3zM1647 590h3v3h-3zM1647 595h3v3h-3zM1647 605h3v3h-3zM1647 610h3v3h-3zM1647 616h3v3h-3zM1647 621h3v3h-3zM1647 631h3v3h-3zM1647 636h3v3h-3zM1647 642h3v3h-3zM1647 647h3v3h-3zM1652.5 527h3v3h-3zM1652.5 532h3v3h-3zM1652.5 538h3v3h-3zM1652.5 543h3v3h-3zM1652.5 553h3v3h-3zM1652.5 558h3v3h-3zM1652.5 564h3v3h-3zM1652.5 569h3v3h-3zM1652.5 579h3v3h-3zM1652.5 584h3v3h-3zM1652.5 590h3v3h-3zM1652.5 595h3v3h-3zM1652.5 605h3v3h-3zM1652.5 610h3v3h-3zM1652.5 616h3v3h-3zM1652.5 621h3v3h-3zM1652.5 631h3v3h-3zM1652.5 636h3v3h-3zM1652.5 642h3v3h-3zM1652.5 647h3v3h-3zM1658 527h3v3h-3zM1658 532h3v3h-3zM1658 538h3v3h-3zM1658 543h3v3h-3zM1658 553h3v3h-3zM1658 558h3v3h-3zM1658 564h3v3h-3zM1658 569h3v3h-3zM1658 579h3v3h-3zM1658 584h3v3h-3zM1658 590h3v3h-3zM1658 595h3v3h-3zM1658 605h3v3h-3zM1658 610h3v3h-3zM1658 616h3v3h-3zM1658 621h3v3h-3zM1658 631h3v3h-3zM1658 636h3v3h-3zM1658 642h3v3h-3zM1658 647h3v3h-3zM1663.5 527h3v3h-3zM1663.5 532h3v3h-3zM1663.5 538h3v3h-3zM1663.5 543h3v3h-3zM1663.5 553h3v3h-3zM1663.5 558h3v3h-3zM1663.5 564h3v3h-3zM1663.5 569h3v3h-3zM1663.5 579h3v3h-3zM1663.5 584h3v3h-3zM1663.5 590h3v3h-3zM1663.5 595h3v3h-3zM1663.5 605h3v3h-3zM1663.5 610h3v3h-3zM1663.5 616h3v3h-3zM1663.5 621h3v3h-3zM1663.5 631h3v3h-3zM1663.5 636h3v3h-3zM1663.5 642h3v3h-3zM1663.5 647h3v3h-3zM1669 527h3v3h-3zM1669 532h3v3h-3zM1669 538h3v3h-3zM1669 543h3v3h-3zM1669 553h3v3h-3zM1669 558h3v3h-3zM1669 564h3v3h-3zM1669 569h3v3h-3zM1669 579h3v3h-3zM1669 584h3v3h-3zM1669 590h3v3h-3zM1669 595h3v3h-3zM1669 605h3v3h-3zM1669 610h3v3h-3zM1669 616h3v3h-3zM1669 621h3v3h-3zM1669 631h3v3h-3zM1669 636h3v3h-3zM1669 642h3v3h-3zM1669 647h3v3h-3zM1674.5 527h3v3h-3zM1674.5 532h3v3h-3zM1674.5 538h3v3h-3zM1674.5 543h3v3h-3zM1674.5 553h3v3h-3zM1674.5 558h3v3h-3zM1674.5 564h3v3h-3zM1674.5 569h3v3h-3zM1674.5 579h3v3h-3zM1674.5 584h3v3h-3zM1674.5 590h3v3h-3zM1674.5 595h3v3h-3zM1674.5 605h3v3h-3zM1674.5 610h3v3h-3zM1674.5 616h3v3h-3zM1674.5 621h3v3h-3zM1674.5 631h3v3h-3zM1674.5 636h3v3h-3zM1674.5 642h3v3h-3zM1674.5 647h3v3h-3zM1680 527h3v3h-3zM1680 532h3v3h-3zM1680 538h3v3h-3zM1680 543h3v3h-3zM1680 553h3v3h-3zM1680 558h3v3h-3zM1680 564h3v3h-3zM1680 569h3v3h-3zM1680 579h3v3h-3zM1680 584h3v3h-3zM1680 590h3v3h-3zM1680 595h3v3h-3zM1680 605h3v3h-3zM1680 610h3v3h-3zM1680 616h3v3h-3zM1680 621h3v3h-3zM1680 631h3v3h-3zM1680 636h3v3h-3zM1680 642h3v3h-3zM1680 647h3v3h-3zM1685.5 527h3v3h-3zM1685.5 532h3v3h-3zM1685.5 538h3v3h-3zM1685.5 543h3v3h-3zM1685.5 553h3v3h-3zM1685.5 558h3v3h-3zM1685.5 564h3v3h-3zM1685.5 569h3v3h-3zM1685.5 579h3v3h-3zM1685.5 584h3v3h-3zM1685.5 590h3v3h-3zM1685.5 595h3v3h-3zM1685.5 605h3v3h-3zM1685.5 610h3v3h-3zM1685.5 616h3v3h-3zM1685.5 621h3v3h-3zM1685.5 631h3v3h-3zM1685.5 636h3v3h-3zM1685.5 642h3v3h-3zM1685.5 647h3v3h-3zM1691 527h3v3h-3zM1691 532h3v3h-3zM1691 538h3v3h-3zM1691 543h3v3h-3zM1691 553h3v3h-3zM1691 558h3v3h-3zM1691 564h3v3h-3zM1691 569h3v3h-3zM1691 579h3v3h-3zM1691 584h3v3h-3zM1691 590h3v3h-3zM1691 595h3v3h-3zM1691 605h3v3h-3zM1691 610h3v3h-3zM1691 616h3v3h-3zM1691 621h3v3h-3zM1691 631h3v3h-3zM1691 636h3v3h-3zM1691 642h3v3h-3zM1691 647h3v3h-3zM1696.5 527h3v3h-3zM1696.5 532h3v3h-3zM1696.5 538h3v3h-3zM1696.5 543h3v3h-3zM1696.5 553h3v3h-3zM1696.5 558h3v3h-3zM1696.5 564h3v3h-3zM1696.5 569h3v3h-3zM1696.5 579h3v3h-3zM1696.5 584h3v3h-3zM1696.5 590h3v3h-3zM1696.5 595h3v3h-3zM1696.5 605h3v3h-3zM1696.5 610h3v3h-3zM1696.5 616h3v3h-3zM1696.5 621h3v3h-3zM1696.5 631h3v3h-3zM1696.5 636h3v3h-3zM1696.5 642h3v3h-3zM1696.5 647h3v3h-3zM1702 527h3v3h-3zM1702 532h3v3h-3zM1702 538h3v3h-3zM1702 543h3v3h-3zM1702 553h3v3h-3zM1702 558h3v3h-3zM1702 564h3v3h-3zM1702 569h3v3h-3zM1702 579h3v3h-3zM1702 584h3v3h-3zM1702 590h3v3h-3zM1702 595h3v3h-3zM1702 605h3v3h-3zM1702 610h3v3h-3zM1702 616h3v3h-3zM1702 621h3v3h-3zM1702 631h3v3h-3zM1702 636h3v3h-3zM1702 642h3v3h-3zM1702 647h3v3h-3zM1707.5 527h3v3h-3zM1707.5 532h3v3h-3zM1707.5 538h3v3h-3zM1707.5 543h3v3h-3zM1707.5 553h3v3h-3zM1707.5 558h3v3h-3zM1707.5 564h3v3h-3zM1707.5 569h3v3h-3zM1707.5 579h3v3h-3zM1707.5 584h3v3h-3zM1707.5 590h3v3h-3zM1707.5 595h3v3h-3zM1707.5 605h3v3h-3zM1707.5 610h3v3h-3zM1707.5 616h3v3h-3zM1707.5 621h3v3h-3zM1707.5 631h3v3h-3zM1707.5 636h3v3h-3zM1707.5 642h3v3h-3zM1707.5 647h3v3h-3zM1713 527h3v3h-3zM1713 532h3v3h-3zM1713 538h3v3h-3zM1713 543h3v3h-3zM1713 553h3v3h-3zM1713 558h3v3h-3zM1713 564h3v3h-3zM1713 569h3v3h-3zM1713 579h3v3h-3zM1713 584h3v3h-3zM1713 590h3v3h-3zM1713 595h3v3h-3zM1713 605h3v3h-3zM1713 610h3v3h-3zM1713 616h3v3h-3zM1713 621h3v3h-3zM1713 631h3v3h-3zM1713 636h3v3h-3zM1713 642h3v3h-3zM1713 647h3v3h-3zM1718.5 527h3v3h-3zM1718.5 532h3v3h-3zM1718.5 538h3v3h-3zM1718.5 543h3v3h-3zM1718.5 553h3v3h-3zM1718.5 558h3v3h-3zM1718.5 564h3v3h-3zM1718.5 569h3v3h-3zM1718.5 579h3v3h-3zM1718.5 584h3v3h-3zM1718.5 590h3v3h-3zM1718.5 595h3v3h-3zM1718.5 605h3v3h-3zM1718.5 610h3v3h-3zM1718.5 616h3v3h-3zM1718.5 621h3v3h-3zM1718.5 631h3v3h-3zM1718.5 636h3v3h-3zM1718.5 642h3v3h-3zM1718.5 647h3v3h-3zM1724 527h3v3h-3zM1724 532h3v3h-3zM1724 538h3v3h-3zM1724 543h3v3h-3zM1724 553h3v3h-3zM1724 558h3v3h-3zM1724 564h3v3h-3zM1724 569h3v3h-3zM1724 579h3v3h-3zM1724 584h3v3h-3zM1724 590h3v3h-3zM1724 595h3v3h-3zM1724 605h3v3h-3zM1724 610h3v3h-3zM1724 616h3v3h-3zM1724 621h3v3h-3zM1724 631h3v3h-3zM1724 636h3v3h-3zM1724 642h3v3h-3zM1724 647h3v3h-3zM1729.5 527h3v3h-3zM1729.5 532h3v3h-3zM1729.5 538h3v3h-3zM1729.5 543h3v3h-3zM1729.5 553h3v3h-3zM1729.5 558h3v3h-3zM1729.5 564h3v3h-3zM1729.5 569h3v3h-3zM1729.5 579h3v3h-3zM1729.5 584h3v3h-3zM1729.5 590h3v3h-3zM1729.5 595h3v3h-3zM1729.5 605h3v3h-3zM1729.5 610h3v3h-3zM1729.5 616h3v3h-3zM1729.5 621h3v3h-3zM1729.5 631h3v3h-3zM1729.5 636h3v3h-3zM1729.5 642h3v3h-3zM1729.5 647h3v3h-3zM1735 527h3v3h-3zM1735 532h3v3h-3zM1735 538h3v3h-3zM1735 543h3v3h-3zM1735 553h3v3h-3zM1735 558h3v3h-3zM1735 564h3v3h-3zM1735 569h3v3h-3zM1735 579h3v3h-3zM1735 584h3v3h-3zM1735 590h3v3h-3zM1735 595h3v3h-3zM1735 605h3v3h-3zM1735 610h3v3h-3zM1735 616h3v3h-3zM1735 621h3v3h-3zM1735 631h3v3h-3zM1735 636h3v3h-3zM1735 642h3v3h-3zM1735 647h3v3h-3zM1740.5 527h3v3h-3zM1740.5 532h3v3h-3zM1740.5 538h3v3h-3zM1740.5 543h3v3h-3zM1740.5 553h3v3h-3zM1740.5 558h3v3h-3zM1740.5 564h3v3h-3zM1740.5 569h3v3h-3zM1740.5 579h3v3h-3zM1740.5 584h3v3h-3zM1740.5 590h3v3h-3zM1740.5 595h3v3h-3zM1740.5 605h3v3h-3zM1740.5 610h3v3h-3zM1740.5 616h3v3h-3zM1740.5 621h3v3h-3zM1740.5 631h3v3h-3zM1740.5 636h3v3h-3zM1740.5 642h3v3h-3zM1740.5 647h3v3h-3zM1746 527h3v3h-3zM1746 532h3v3h-3zM1746 538h3v3h-3zM1746 543h3v3h-3zM1746 553h3v3h-3zM1746 558h3v3h-3zM1746 564h3v3h-3zM1746 569h3v3h-3zM1746 579h3v3h-3zM1746 584h3v3h-3zM1746 590h3v3h-3zM1746 595h3v3h-3zM1746 605h3v3h-3zM1746 610h3v3h-3zM1746 616h3v3h-3zM1746 621h3v3h-3zM1746 631h3v3h-3zM1746 636h3v3h-3zM1746 642h3v3h-3zM1746 647h3v3h-3zM1751.5 527h3v3h-3zM1751.5 532h3v3h-3zM1751.5 538h3v3h-3zM1751.5 543h3v3h-3zM1751.5 553h3v3h-3zM1751.5 558h3v3h-3zM1751.5 564h3v3h-3zM1751.5 569h3v3h-3zM1751.5 579h3v3h-3zM1751.5 584h3v3h-3zM1751.5 590h3v3h-3zM1751.5 595h3v3h-3zM1751.5 605h3v3h-3zM1751.5 610h3v3h-3zM1751.5 616h3v3h-3zM1751.5 621h3v3h-3zM1751.5 631h3v3h-3zM1751.5 636h3v3h-3zM1751.5 642h3v3h-3zM1751.5 647h3v3h-3zM1757 527h3v3h-3zM1757 532h3v3h-3zM1757 538h3v3h-3zM1757 543h3v3h-3zM1757 553h3v3h-3zM1757 558h3v3h-3zM1757 564h3v3h-3zM1757 569h3v3h-3zM1757 579h3v3h-3zM1757 584h3v3h-3zM1757 590h3v3h-3zM1757 595h3v3h-3zM1757 605h3v3h-3zM1757 610h3v3h-3zM1757 616h3v3h-3zM1757 621h3v3h-3zM1757 631h3v3h-3zM1757 636h3v3h-3zM1757 642h3v3h-3zM1757 647h3v3h-3zM1762.5 527h3v3h-3zM1762.5 532h3v3h-3zM1762.5 538h3v3h-3zM1762.5 543h3v3h-3zM1762.5 553h3v3h-3zM1762.5 558h3v3h-3zM1762.5 564h3v3h-3zM1762.5 569h3v3h-3zM1762.5 579h3v3h-3zM1762.5 584h3v3h-3zM1762.5 590h3v3h-3zM1762.5 595h3v3h-3zM1762.5 605h3v3h-3zM1762.5 610h3v3h-3zM1762.5 616h3v3h-3zM1762.5 621h3v3h-3zM1762.5 631h3v3h-3zM1762.5 636h3v3h-3zM1762.5 642h3v3h-3zM1762.5 647h3v3h-3zM1768 527h3v3h-3zM1768 532h3v3h-3zM1768 538h3v3h-3zM1768 543h3v3h-3zM1768 553h3v3h-3zM1768 558h3v3h-3zM1768 564h3v3h-3zM1768 569h3v3h-3zM1768 579h3v3h-3zM1768 584h3v3h-3zM1768 590h3v3h-3zM1768 595h3v3h-3zM1768 605h3v3h-3zM1768 610h3v3h-3zM1768 616h3v3h-3zM1768 621h3v3h-3zM1768 631h3v3h-3zM1768 636h3v3h-3zM1768 642h3v3h-3zM1768 647h3v3h-3zM1773.5 527h3v3h-3zM1773.5 532h3v3h-3zM1773.5 538h3v3h-3zM1773.5 543h3v3h-3zM1773.5 553h3v3h-3zM1773.5 558h3v3h-3zM1773.5 564h3v3h-3zM1773.5 569h3v3h-3zM1773.5 579h3v3h-3zM1773.5 584h3v3h-3zM1773.5 590h3v3h-3zM1773.5 595h3v3h-3zM1773.5 605h3v3h-3zM1773.5 610h3v3h-3zM1773.5 616h3v3h-3zM1773.5 621h3v3h-3zM1773.5 631h3v3h-3zM1773.5 636h3v3h-3zM1773.5 642h3v3h-3zM1773.5 647h3v3h-3z"/></svg>
<div class="t" style="left:27px;top:109px;color:#657b83;">Wed Jul 30 03:03:08 2025</div>
<div class="t" style="left:555px;top:109px;color:#657b83;">(Press </div>
<div class="t" style="left:632px;top:109px;color:#6c71c4;font-weight:bold;-webkit-text-stroke:0;">h</div>
<div class="t" style="left:643px;top:109px;color:#657b83;"> for help or </div>
<div class="t" style="left:786px;top:109px;color:#6c71c4;font-weight:bold;-webkit-text-stroke:0;">q</div>
<div class="t" style="left:797px;top:109px;color:#657b83;"> to quit)</div>
<div class="t" style="left:49px;top:161px;color:#657b83;">NVITOP 1.5.2</div>
<div class="t" style="left:247px;top:161px;color:#657b83;">Driver Version: 535.216.01</div>
<div class="t" style="left:599px;top:161px;color:#657b83;">CUDA Driver Version: 12.2</div>
<div class="t" style="left:49px;top:213px;color:#657b83;">GPU  Name        Persistence-M</div>
<div class="t" style="left:401px;top:213px;color:#657b83;">Bus-Id        Disp.A</div>
<div class="t" style="left:654px;top:213px;color:#657b83;">Volatile Uncorr. ECC</div>
<div class="t" style="left:49px;top:239px;color:#657b83;">Fan  Temp  Perf  Pwr:Usage/Cap</div>
<div class="t" style="left:489px;top:239px;color:#657b83;">Memory-Usage</div>
<div class="t" style="left:654px;top:239px;color:#657b83;">GPU-Util  Compute M.</div>
<div class="t" style="left:71px;top:291px;color:#dc322f;">0</div>
<div class="t" style="left:104px;top:291px;color:#dc322f;">Tesla T4</div>
<div class="t" style="left:346px;top:291px;color:#dc322f;">On</div>
<div class="t" style="left:401px;top:291px;color:#dc322f;">00000000:00:08.0 Off</div>
<div class="t" style="left:863px;top:291px;color:#dc322f;">0</div>
<div class="t" style="left:907px;top:291px;color:#859900;">MEM:</div>
<div class="t" style="left:984px;top:291px;color:#859900;">0.7%</div>
<div class="r" style="left:962px;top:288px;width:5px;height:26px;background:#859900;"></div>
<div class="t" style="left:49px;top:317px;color:#dc322f;">N/A</div>
<div class="t" style="left:115px;top:317px;color:#dc322f;">68C</div>
<div class="t" style="left:192px;top:317px;color:#dc322f;">P0</div>
<div class="t" style="left:269px;top:317px;color:#dc322f;">69W / 70W</div>
<div class="t" style="left:412px;top:317px;color:#dc322f;">107.0MiB / 15360MiB</div>
<div class="t" style="left:687px;top:317px;color:#dc322f;">100%</div>
<div class="t" style="left:797px;top:317px;color:#dc322f;">Default</div>
<div class="t" style="left:907px;top:317px;color:#dc322f;">UTL:</div>
<div class="t" style="left:1732px;top:317px;color:#dc322f;">MAX</div>
<div class="r" style="left:962px;top:314px;width:759px;height:26px;background:#dc322f;"></div>
<div class="t" style="left:49px;top:369px;color:#657b83;">Load Average:  1.05  0.86  0.75</div>
<div class="t" style="left:907px;top:369px;color:#657b83;">GPU MEM: 0.7%</div>
<div class="t" style="left:49px;top:395px;color:#657b83;">CPU: 13.3%</div>
<div class="t" style="left:181px;top:499px;color:#586e75;">120s</div>
<div class="t" style="left:522px;top:499px;color:#586e75;">60s</div>
<div class="t" style="left:687px;top:499px;color:#586e75;">30s</div>
<div class="t" style="left:1072px;top:499px;color:#586e75;">120s</div>
<div class="t" style="left:1413px;top:499px;color:#586e75;">60s</div>
<div class="t" style="left:1578px;top:499px;color:#586e75;">30s</div>
<div class="t" style="left:49px;top:603px;color:#657b83;">MEM: 0.73GiB (3.8%)</div>
<div class="t" style="left:49px;top:629px;color:#657b83;">SWP: 0.00GiB (0.0%)</div>
<div class="t" style="left:907px;top:629px;color:#657b83;">GPU UTL: 100.0%</div>
<div class="t" style="left:49px;top:733px;color:#657b83;">Processes:</div>
<div class="t" style="left:1545px;top:733px;color:#6c71c4;font-weight:bold;-webkit-text-stroke:0;">ubuntu</div>
<div class="t" style="left:1611px;top:733px;color:#586e75;font-weight:bold;-webkit-text-stroke:0;">@VM-0-8-ubuntu</div>
<div class="t" style="left:49px;top:759px;color:#586e75;font-weight:bold;-webkit-text-stroke:0;">GPU</div>
<div class="t" style="left:137px;top:759px;color:#657b83;">PID</div>
<div class="t" style="left:236px;top:759px;color:#657b83;">USER</div>
<div class="t" style="left:302px;top:759px;color:#657b83;">GPU-MEM</div>
<div class="t" style="left:390px;top:759px;color:#657b83;">%SM</div>
<div class="t" style="left:434px;top:759px;color:#657b83;">%GMBW</div>
<div class="t" style="left:511px;top:759px;color:#657b83;">%CPU</div>
<div class="t" style="left:577px;top:759px;color:#657b83;">%MEM</div>
<div class="t" style="left:643px;top:759px;color:#657b83;">TIME</div>
<div class="t" style="left:709px;top:759px;color:#657b83;">COMMAND</div>
<div class="t" style="left:71px;top:811px;color:#dc322f;">0</div>
<div class="t" style="left:115px;top:811px;color:#657b83;">62203 C</div>
<div class="t" style="left:214px;top:811px;color:#657b83;">ubuntu</div>
<div class="t" style="left:291px;top:811px;color:#657b83;">102.0MiB</div>
<div class="t" style="left:390px;top:811px;color:#657b83;">100</div>
<div class="t" style="left:478px;top:811px;color:#657b83;">0</div>
<div class="t" style="left:500px;top:811px;color:#657b83;">100.2</div>
<div class="t" style="left:588px;top:811px;color:#657b83;">0.3</div>
<div class="t" style="left:643px;top:811px;color:#657b83;">2:27</div>
<div class="t" style="left:709px;top:811px;color:#657b83;">./minute_payload</div>
<div class="r" style="left:27px;top:886px;width:1760px;height:26px;background:#859900;"></div>
<div class="t" style="left:27px;top:889px;color:#073642;">[0] 0:./minute_payload- 1:python* 2:htop</div>
<div class="t" style="left:1446px;top:889px;color:#073642;">"VM-0-8-ubuntu" 03:02 30-Jul-25</div>
<div class="r" style="left:31px;top:142px;width:860px;height:2px;background:#586e75;"></div>
<div class="r" style="left:31px;top:146px;width:860px;height:2px;background:#586e75;"></div>
<div class="r" style="left:31px;top:196px;width:860px;height:2px;background:#586e75;"></div>
<div class="r" style="left:31px;top:272px;width:1751px;height:2px;background:#586e75;"></div>
<div class="r" style="left:31px;top:276px;width:1751px;height:2px;background:#586e75;"></div>
<div class="r" style="left:31px;top:350px;width:1751px;height:2px;background:#586e75;"></div>
<div class="r" style="left:31px;top:354px;width:1751px;height:2px;background:#586e75;"></div>
<div class="r" style="left:31px;top:662px;width:1751px;height:2px;background:#586e75;"></div>
<div class="r" style="left:31px;top:666px;width:1751px;height:2px;background:#586e75;"></div>
<div class="r" style="left:31px;top:142px;width:2px;height:526px;background:#586e75;"></div>
<div class="r" style="left:889px;top:142px;width:2px;height:522px;background:#586e75;"></div>
<div class="r" style="left:383px;top:196px;width:2px;height:156px;background:#586e75;"></div>
<div class="r" style="left:636px;top:196px;width:2px;height:156px;background:#586e75;"></div>
<div class="r" style="left:1780px;top:272px;width:2px;height:396px;background:#586e75;"></div>
<div class="r" style="left:31px;top:508px;width:145px;height:2px;background:#586e75;"></div>
<div class="r" style="left:229px;top:508px;width:288px;height:2px;background:#586e75;"></div>
<div class="r" style="left:559px;top:508px;width:123px;height:2px;background:#586e75;"></div>
<div class="r" style="left:724px;top:508px;width:343px;height:2px;background:#586e75;"></div>
<div class="r" style="left:1120px;top:508px;width:288px;height:2px;background:#586e75;"></div>
<div class="r" style="left:1450px;top:508px;width:123px;height:2px;background:#586e75;"></div>
<div class="r" style="left:1615px;top:508px;width:167px;height:2px;background:#586e75;"></div>
<div class="r" style="left:229px;top:496px;width:2px;height:26px;background:#586e75;"></div>
<div class="r" style="left:559px;top:496px;width:2px;height:26px;background:#586e75;"></div>
<div class="r" style="left:724px;top:496px;width:2px;height:26px;background:#586e75;"></div>
<div class="r" style="left:1120px;top:496px;width:2px;height:26px;background:#586e75;"></div>
<div class="r" style="left:1450px;top:496px;width:2px;height:26px;background:#586e75;"></div>
<div class="r" style="left:1615px;top:496px;width:2px;height:26px;background:#586e75;"></div>
<div class="r" style="left:31px;top:714px;width:1751px;height:2px;background:#586e75;"></div>
<div class="r" style="left:31px;top:718px;width:1751px;height:2px;background:#586e75;"></div>
<div class="r" style="left:31px;top:792px;width:1751px;height:2px;background:#586e75;"></div>
<div class="r" style="left:31px;top:796px;width:1751px;height:2px;background:#586e75;"></div>
<div class="r" style="left:31px;top:844px;width:1751px;height:2px;background:#586e75;"></div>
<div class="r" style="left:31px;top:848px;width:1751px;height:2px;background:#586e75;"></div>
<div class="r" style="left:31px;top:714px;width:2px;height:136px;background:#586e75;"></div>
<div class="r" style="left:1780px;top:714px;width:2px;height:136px;background:#586e75;"></div>
</body></html>
